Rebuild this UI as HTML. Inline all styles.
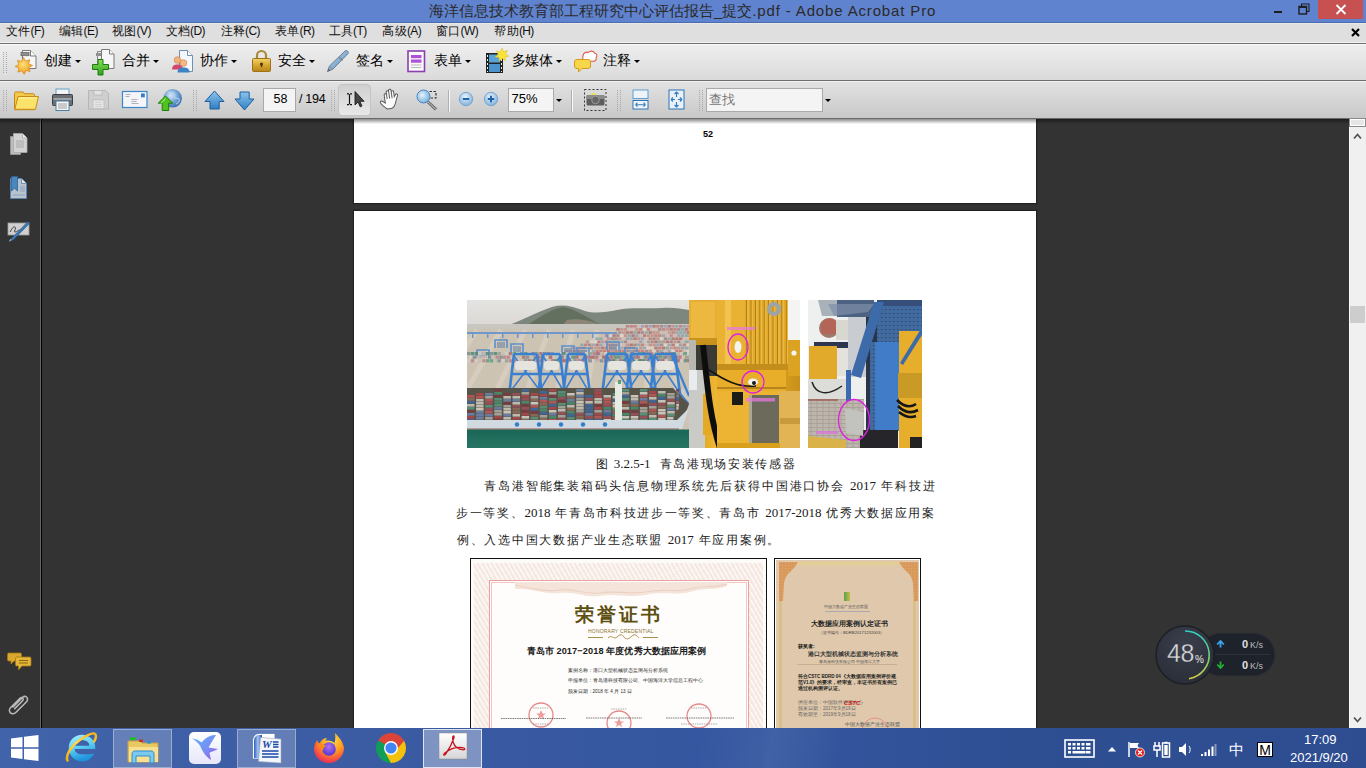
<!DOCTYPE html>
<html><head><meta charset="utf-8">
<style>
*{margin:0;padding:0;box-sizing:border-box}
html,body{width:1366px;height:768px;overflow:hidden;background:#333;font-family:"Liberation Sans",sans-serif}
.a{position:absolute}
#title{left:0;top:0;width:1366px;height:23px;background:#6083cf;border-bottom:1px solid #4a6cb0}
#ttext{left:429px;top:2px;font-size:15px;color:#2a2a2a;white-space:nowrap}
.tl{letter-spacing:0.85px}
#menu{left:0;top:23px;width:1366px;height:20px;background:#dfdfdf;border-top:1px solid #ebe9e6}
.mi{top:24px;font-size:12px;letter-spacing:0.3px;color:#111;white-space:nowrap;line-height:14px}
.ml{letter-spacing:-0.6px}
#sep1{left:0;top:42px;width:1366px;height:3px;background:linear-gradient(#f5f5f5 0,#f5f5f5 1px,#6e6e6e 1px,#6e6e6e 2px,#fafafa 2px)}
#tb1{left:0;top:45px;width:1366px;height:35px;background:linear-gradient(#eeeeee,#dadada)}
#sep2{left:0;top:80px;width:1366px;height:2px;background:linear-gradient(#6e6e6e 0,#6e6e6e 1px,#f3f3f3 1px)}
#tb2{left:0;top:82px;width:1366px;height:36px;background:linear-gradient(#e2e2e2,#c8c8c8)}
#sep3{left:0;top:118px;width:1366px;height:1px;background:#6a6a6a}
#left{left:0;top:119px;width:42px;height:609px;background:linear-gradient(90deg,#333 40px,#666 40px,#666 41px,#000 41px)}
#doc{left:42px;top:119px;width:1308px;height:609px;background:#333;overflow:hidden}
#page1{left:312px;top:-10px;width:682px;height:94px;background:#fff;box-shadow:0 0 1px 1px #222}
#page2{left:312px;top:92px;width:682px;height:700px;background:#fff;box-shadow:0 0 1px 1px #222}
#shadow{left:0;top:119px;width:1349px;height:5px;background:linear-gradient(rgba(0,0,0,.45),rgba(0,0,0,0))}
#scroll{left:1349px;top:119px;width:17px;height:609px;background:#efefef}
#taskbar{left:0;top:728px;width:1366px;height:40px;background:linear-gradient(90deg,#4163a9 0,#3a5ba2 30%,#3456a0 55%,#2f4f93 75%,#2e4d90 100%)}
.tk{color:#fff;font-size:12px;white-space:nowrap}.t1{top:53px;font-size:13.5px;line-height:16px;color:#000;white-space:nowrap;letter-spacing:0px}
.dd{width:0;height:0;border-left:3px solid transparent;border-right:3px solid transparent;border-top:3px solid #000}
.grip{width:4px;background-image:linear-gradient(90deg,#a8a8a8 1px,transparent 1px,transparent 3px,#a8a8a8 3px),linear-gradient(#fff0 1px,#e0e0e0 1px);background-size:4px 2px;-webkit-mask:linear-gradient(#000 1px,transparent 1px) 0 0/4px 2px}

.box{background:#f4f4f4;border:1px solid #a9a9a9}
.t2{font-size:13px;line-height:15px;color:#000;white-space:nowrap}
.vsep{width:2px;background:linear-gradient(90deg,#b0b0b0 1px,#f8f8f8 1px)}
.pt{font-family:"Liberation Serif",serif;font-size:12px;line-height:16px;color:#1a1a1a;white-space:nowrap;letter-spacing:1.3px}
.ln{font-size:13px;letter-spacing:0}
.jl{text-align:justify;text-align-last:justify;white-space:normal}

</style></head><body>
<div id="title" class="a"></div>
<div id="ttext" class="a">海洋信息技术教育部工程研究中心评估报告_提交<span class="tl">.pdf - Adobe Acrobat Pro</span></div>
<div id="menu" class="a"></div>

<div class="a mi" style="left:6px">文件<span class="ml">(F)</span></div>
<div class="a mi" style="left:59px">编辑<span class="ml">(E)</span></div>
<div class="a mi" style="left:112px">视图<span class="ml">(V)</span></div>
<div class="a mi" style="left:165.5px">文档<span class="ml">(D)</span></div>
<div class="a mi" style="left:220.5px">注释<span class="ml">(C)</span></div>
<div class="a mi" style="left:275px">表单<span class="ml">(R)</span></div>
<div class="a mi" style="left:328.5px">工具<span class="ml">(T)</span></div>
<div class="a mi" style="left:382.3px">高级<span class="ml">(A)</span></div>
<div class="a mi" style="left:436px">窗口<span class="ml">(W)</span></div>
<div class="a mi" style="left:494.3px">帮助<span class="ml">(H)</span></div>
<svg class="a" style="left:1351px;top:28px" width="9" height="9" viewBox="0 0 9 9"><path d="M1 1L8 8M8 1L1 8" stroke="#000" stroke-width="2.2"/></svg>
<div id="sep1" class="a"></div>
<div id="tb1" class="a"></div>
<div id="sep2" class="a"></div>
<div id="tb2" class="a"></div>
<div id="sep3" class="a"></div>
<div id="left" class="a"></div>
<div id="doc" class="a">
  <div id="page1" class="a"></div>
  <div id="page2" class="a"></div>
</div>
<div id="shadow" class="a"></div>
<div id="scroll" class="a"></div>
<div class="a" style="left:1318px;top:0;width:45px;height:19px;background:#c75050"></div>
<svg class="a" style="left:1335px;top:4px" width="12" height="11" viewBox="0 0 12 11"><path d="M1.5 1l9 9M10.5 1l-9 9" stroke="#fff" stroke-width="1.8"/></svg>
<div class="a" style="left:1274px;top:11px;width:8px;height:2px;background:#1e1e1e"></div>
<svg class="a" style="left:1298px;top:3px" width="12" height="12" viewBox="0 0 12 12"><path d="M3.5 3V1h7.5v7.5H9" fill="none" stroke="#1e1e1e" stroke-width="1.1"/><rect x="1" y="3.5" width="7.5" height="7.5" fill="none" stroke="#1e1e1e" stroke-width="1.4"/><path d="M1 4.2h7.5" stroke="#1e1e1e" stroke-width="1.5"/></svg>

<div class="a grip" style="left:3px;top:52px;height:22px"></div>
<!-- create -->
<svg class="a" style="left:13px;top:49px" width="26" height="28" viewBox="0 0 26 28">
 <path d="M9.5 1.5h8l5.5 5.5v12.5h-13.5z" fill="#f6f6f6" stroke="#7a7a7a"/>
 <path d="M17.5 1.5v5.5h5.5" fill="#fff" stroke="#7a7a7a"/>
 <rect x="8" y="3.5" width="8" height="3.2" fill="#8e8e8e" stroke="#6a6a6a" stroke-width="0.8"/>
 <defs><radialGradient id="st" cx=".45" cy=".4" r=".6"><stop offset="0" stop-color="#ffe07a"/><stop offset="1" stop-color="#f09a18"/></radialGradient></defs>
 <path d="M10.5 8.5l2.2 3.6 4-1.4-1 4.1 3.9 1.7-3.7 1.9 1.2 4.1-4.1-1-1.8 3.9-2.3-3.6-4 1.4 1-4.1-3.9-1.7 3.7-1.9-1.2-4.1 4.1 1z" fill="url(#st)" stroke="#d8861a" stroke-width="0.7"/>
</svg>
<div class="a t1" style="left:44px">创建</div><div class="a dd" style="left:74.5px;top:60px"></div>
<!-- combine -->
<svg class="a" style="left:91px;top:48px" width="26" height="29" viewBox="0 0 26 29">
 <path d="M6.5 3.5h8l4 4v12h-12z" fill="#eaeaea" stroke="#888"/>
 <rect x="5" y="5" width="8" height="3" fill="#909090"/>
 <path d="M10.5 1.5h8l4.5 4.5v14.5h-12.5z" fill="#f6f6f6" stroke="#7a7a7a"/>
 <path d="M18.5 1.5v4.5h4.5" fill="#fff" stroke="#7a7a7a"/>
 <defs><linearGradient id="pl" x1="0" y1="0" x2="0" y2="1"><stop offset="0" stop-color="#8be05a"/><stop offset="1" stop-color="#2ea01a"/></linearGradient></defs>
 <path d="M7 11.5h5v5h5.5v5h-5.5v5.5h-5v-5.5h-5.5v-5h5.5z" fill="url(#pl)" stroke="#1f7a10" stroke-width="1"/>
</svg>
<div class="a t1" style="left:122px">合并</div><div class="a dd" style="left:152.5px;top:60px"></div>
<!-- collaborate -->
<svg class="a" style="left:171px;top:49px" width="24" height="25" viewBox="0 0 24 25">
 <path d="M8.5 1.5h8l5 5v16h-13z" fill="#f4f7fb" stroke="#6f8fb3"/>
 <path d="M16.5 1.5v5h5" fill="#fff" stroke="#6f8fb3"/>
 <circle cx="6.5" cy="11" r="3.3" fill="#f3b27a" stroke="#c77d43" stroke-width="0.6"/>
 <path d="M1 20.5c0-4 2.5-5 5.5-5s5.5 1 5.5 5z" fill="#d0486b"/>
 <circle cx="12.5" cy="14" r="3.3" fill="#f6b982" stroke="#c77d43" stroke-width="0.6"/>
 <path d="M6.5 23.5c0-4 2.5-5 6-5s6 1 6 5z" fill="#3f83c7"/>
</svg>
<div class="a t1" style="left:200px">协作</div><div class="a dd" style="left:231px;top:60px"></div>
<!-- lock -->
<svg class="a" style="left:251px;top:49px" width="21" height="25" viewBox="0 0 21 25">
 <defs><linearGradient id="lk" x1="0" y1="0" x2="0" y2="1"><stop offset="0" stop-color="#f2d46a"/><stop offset=".5" stop-color="#d8a830"/><stop offset="1" stop-color="#b8841a"/></linearGradient></defs>
 <path d="M6 10V6.5a4.5 4.5 0 0 1 9 0V10" fill="none" stroke="#a88a3a" stroke-width="2.2"/>
 <rect x="1.5" y="9.5" width="18" height="13" rx="1" fill="url(#lk)" stroke="#9c7418"/>
 <circle cx="10.5" cy="15" r="1.5" fill="#4a3408"/><rect x="9.8" y="15" width="1.4" height="3" fill="#4a3408"/>
</svg>
<div class="a t1" style="left:278px">安全</div><div class="a dd" style="left:308.5px;top:60px"></div>
<!-- pen -->
<svg class="a" style="left:326px;top:49px" width="26" height="25" viewBox="0 0 26 25">
 <defs><linearGradient id="pn" x1="0" y1="0" x2="1" y2="1"><stop offset="0" stop-color="#b8daf2"/><stop offset="1" stop-color="#5a8ab8"/></linearGradient></defs>
 <path d="M1.5 22.5l2-5.5 15.5-15c1.6-1.3 4.2.7 3 2.6l-15 15.5z" fill="url(#pn)" stroke="#6a7f92" stroke-width="1"/>
 <path d="M3.5 17l3.5 3.5" stroke="#8a98a6" stroke-width="1.2"/>
 <path d="M1.5 22.5l1-3 2 2z" fill="#666"/>
 <path d="M13 8l3.5 3.5" stroke="#7a8a98" stroke-width="1.6"/>
</svg>
<div class="a t1" style="left:356px">签名</div><div class="a dd" style="left:386.5px;top:60px"></div>
<!-- forms -->
<svg class="a" style="left:407px;top:50px" width="19" height="23" viewBox="0 0 19 23">
 <rect x="1" y="1" width="16.5" height="20.5" fill="#fafafa" stroke="#8a3fb0" stroke-width="1.6"/>
 <rect x="4" y="5" width="10.5" height="3.2" fill="#b04fd8"/>
 <rect x="4" y="9.5" width="10.5" height="3.2" fill="#b04fd8"/>
 <path d="M4 15h10.5M4 17.5h10.5" stroke="#aaa" stroke-width="0.8"/>
</svg>
<div class="a t1" style="left:434px">表单</div><div class="a dd" style="left:464.5px;top:60px"></div>
<!-- multimedia -->
<svg class="a" style="left:485px;top:47px" width="25" height="27" viewBox="0 0 25 27">
 <rect x="1" y="6" width="17" height="20" fill="#222"/>
 <rect x="4" y="7.5" width="11" height="8" fill="#5aa3d8"/>
 <rect x="4" y="17" width="11" height="8" fill="#4b93cc"/>
 <path d="M2.5 8v2M2.5 12v2M2.5 16v2M2.5 20v2M2.5 24v1M16.5 8v2M16.5 12v2M16.5 16v2M16.5 20v2M16.5 24v1" stroke="#eee" stroke-width="1"/>
 <path d="M17 1l1.6 3.6 3.9-1-1.9 3.5 3.4 2.2-4 0.6 0.4 4-3.2-2.4-2.8 2.8-0.4-4-4-0.4 3.2-2.5-1.8-3.5 3.8 1z" fill="#f9e43a" stroke="#e3b91c" stroke-width="0.5"/>
</svg>
<div class="a t1" style="left:512px;letter-spacing:-0.6px">多媒体</div><div class="a dd" style="left:555.5px;top:60px"></div>
<!-- comment -->
<svg class="a" style="left:574px;top:50px" width="24" height="23" viewBox="0 0 24 23">
 <path d="M9 6c0-3 3-4.5 5.5-3.5 1.5-2 5-1.8 6 0.5 2.5 0.2 3 3.2 1.5 4.8 1 2-1 4-3 3.5H12c-2.5 0-4-2.5-3-5.3z" fill="#fff" stroke="#e0584a" stroke-width="1.1"/>
 <path d="M3 9.5h11c1.6 0 2.5 1 2.5 2.5v4c0 1.6-1 2.5-2.5 2.5H8l-3.5 3.5v-3.5H3c-1.6 0-2.5-1-2.5-2.5v-4c0-1.6 1-2.5 2.5-2.5z" fill="#f8d64a" stroke="#d49a1c" stroke-width="1"/>
</svg>
<div class="a t1" style="left:603px">注释</div><div class="a dd" style="left:633.5px;top:60px"></div>

<div class="a grip" style="left:3px;top:90px;height:22px"></div>
<!-- folder -->
<svg class="a" style="left:13px;top:90px" width="27" height="21" viewBox="0 0 27 21">
 <path d="M1.5 3.5c0-1 .6-1.5 1.5-1.5h7l1.5 1.7h8.5c.9 0 1.5.5 1.5 1.5v14.5H1.5z" fill="#f2c94a" stroke="#c88a17" stroke-width="1"/>
 <path d="M5 6.5h20.5l-3 12.8H1.8z" fill="#fbe26a" stroke="#c88a17" stroke-width="1"/>
 <path d="M6 8h18" stroke="#fff3a8" stroke-width="1"/>
</svg>
<!-- printer -->
<svg class="a" style="left:51px;top:88px" width="24" height="24" viewBox="0 0 24 24">
 <rect x="5" y="1" width="13" height="7" fill="#f3f3f3" stroke="#5fa3c9" stroke-width="1"/>
 <rect x="1.5" y="6.5" width="20" height="11" rx="1" fill="#6b6e72" stroke="#3c3f42"/>
 <rect x="2.5" y="10" width="18" height="2" fill="#9fa3a7"/>
 <rect x="5" y="13" width="13" height="9.5" fill="#f5f5f5" stroke="#4b7fa6" stroke-width="1"/>
 <path d="M7 16h9M7 18h9M7 20h9" stroke="#888" stroke-width="0.8"/>
</svg>
<!-- save (disabled) -->
<svg class="a" style="left:87px;top:89px" width="23" height="22" viewBox="0 0 23 22">
 <path d="M1.5 1.5h17l3 3v15.5h-20z" fill="#cfcfcf" stroke="#b5b5b5"/>
 <rect x="7" y="1.5" width="8" height="4.5" fill="#e3e3e3" stroke="#b8b8b8" stroke-width="0.8"/>
 <rect x="6" y="11" width="11" height="8.5" fill="#e6e6e6" stroke="#bdbdbd" stroke-width="0.8"/>
 <path d="M8 13.5h7M8 15.5h7M8 17.5h7" stroke="#c5c5c5" stroke-width="0.7"/>
</svg>
<!-- email -->
<svg class="a" style="left:121px;top:90px" width="28" height="19" viewBox="0 0 28 19">
 <rect x="1.5" y="1.5" width="24.5" height="16" fill="#f3f5f8" stroke="#3d86cc" stroke-width="1.2"/>
 <rect x="20" y="3.5" width="3.8" height="3.8" fill="#3a7cc0"/>
 <path d="M4.5 4.5h5M4.5 6.5h4M10.5 9.5h6M10.5 11.5h5M10.5 13.5h7" stroke="#9aa0a8" stroke-width="0.8"/>
</svg>
<!-- globe upload -->
<svg class="a" style="left:157px;top:88px" width="27" height="24" viewBox="0 0 27 24">
 <defs><radialGradient id="gl" cx="0.4" cy="0.35" r="0.7"><stop offset="0" stop-color="#d6e8f7"/><stop offset="0.55" stop-color="#6fa1d4"/><stop offset="1" stop-color="#3769a8"/></radialGradient></defs>
 <circle cx="15.6" cy="10.3" r="9.3" fill="url(#gl)"/>
 <path d="M11 4c2 1 4 0 6 1.5s-1 3 1 4.5 3-1 4 1-1 4-3 5" fill="none" stroke="#b9d6ee" stroke-width="1.2" opacity=".8"/>
 <path d="M8.5 8l7.2 7.2h-4v7.3h-6.5v-7.3h-4z" fill="#4fc21c" stroke="#1f7d0c" stroke-width="1"/>
 <path d="M4 15.5l4.5-5" stroke="#b5ef8a" stroke-width="1"/>
</svg>
<div class="a grip" style="left:193px;top:90px;height:22px"></div>
<!-- up arrow -->
<svg class="a" style="left:204px;top:90px" width="21" height="20" viewBox="0 0 21 20">
 <defs><linearGradient id="ar" x1="0" y1="0" x2="0" y2="1"><stop offset="0" stop-color="#8cc4ec"/><stop offset="1" stop-color="#2e7fc4"/></linearGradient></defs>
 <path d="M10.5 1L20 11.5h-4.8v7.5H6v-7.5H1z" fill="url(#ar)" stroke="#1f5f9e" stroke-width="1"/>
</svg>
<!-- down arrow -->
<svg class="a" style="left:234px;top:91px" width="21" height="20" viewBox="0 0 21 20">
 <path d="M10.5 19L20 8h-4.8V1H6v7H1z" fill="url(#ar)" stroke="#1f5f9e" stroke-width="1"/>
</svg>
<div class="a box" style="left:263px;top:88px;width:33px;height:24px"></div>
<div class="a t2" style="left:273.5px;top:91.5px;font-size:12.5px">58</div>
<div class="a t2" style="left:299px;top:91.5px;font-size:12.5px;letter-spacing:-0.3px">/ 194</div>
<div class="a grip" style="left:331px;top:90px;height:22px"></div>
<div class="a" style="left:338px;top:84px;width:33px;height:31.5px;border:1px solid #c4c4c4;border-radius:4px;background:linear-gradient(#d0d0d0,#e8e8e8)"></div>
<!-- I-beam + arrow -->
<svg class="a" style="left:345px;top:90px" width="21" height="18" viewBox="0 0 21 18">
 <path d="M2 3.8h2M5 3.8h2M2 14.7h2M5 14.7h2M4.5 4.2V14.3" stroke="#111" stroke-width="1.2"/>
 <path d="M10 1.5v13.5l3-3 2.2 4.8 1.8-0.8-2.2-4.7h4.3z" fill="#444" stroke="#111" stroke-width="0.8"/>
</svg>
<!-- hand -->
<svg class="a" style="left:379px;top:88px" width="23" height="22" viewBox="0 0 23 22">
 <path d="M7 20.5c-2.2-1.6-5.8-5.6-6-7.2-.2-1.3 1.2-1.9 2.2-1.1l2.6 2.2V6.2c0-1.5 2.4-1.5 2.4 0v4.3V3.6c0-1.6 2.5-1.6 2.5 0v6.9V2.6c0-1.6 2.5-1.6 2.5 0v8V4.4c0-1.5 2.4-1.5 2.4 0v4.8l1.4-1.8c.9-1.2 2.6-.4 2 1.1l-2.4 5.5c-1.2 3.6-2.6 6.5-5.6 6.5z" fill="#fbfbfb" stroke="#5a5a5a" stroke-width="1" transform="rotate(-8 11 11)"/>
</svg>
<!-- zoom marquee -->
<svg class="a" style="left:415px;top:89px" width="24" height="22" viewBox="0 0 24 22">
 <defs><radialGradient id="mg" cx="0.4" cy="0.4" r="0.7"><stop offset="0" stop-color="#e6f3fc"/><stop offset="1" stop-color="#6aa8d8"/></radialGradient></defs>
 <path d="M13 13l8 7.5" stroke="#555" stroke-width="3"/>
 <path d="M13 13l8 7.5" stroke="#b0b0b0" stroke-width="1.2"/>
 <rect x="10.5" y="2.5" width="10.5" height="6.5" fill="none" stroke="#333" stroke-width="1.2" stroke-dasharray="2.5 1.5"/>
 <circle cx="8.5" cy="7.5" r="6.5" fill="url(#mg)" stroke="#4e88bd" stroke-width="1"/>
</svg>
<div class="a vsep" style="left:448px;top:90px;height:22px"></div>
<svg class="a" style="left:458px;top:91px" width="16" height="16" viewBox="0 0 16 16">
 <defs><radialGradient id="zb" cx="0.45" cy="0.35" r="0.65"><stop offset="0" stop-color="#e9f4fc"/><stop offset="1" stop-color="#7fb0dc"/></radialGradient></defs>
 <circle cx="8" cy="8" r="6.7" fill="url(#zb)" stroke="#7aa6cf" stroke-width="1"/>
 <path d="M4.8 8h6.4" stroke="#1e62b0" stroke-width="2"/>
</svg>
<svg class="a" style="left:483px;top:91px" width="16" height="16" viewBox="0 0 16 16">
 <circle cx="8" cy="8" r="6.7" fill="url(#zb)" stroke="#7aa6cf" stroke-width="1"/>
 <path d="M4.8 8h6.4M8 4.8v6.4" stroke="#1e62b0" stroke-width="2"/>
</svg>
<div class="a box" style="left:508px;top:88px;width:46px;height:24px"></div>
<div class="a t2" style="left:511.5px;top:91px">75%</div>
<div class="a dd" style="left:555.5px;top:99px"></div>
<div class="a vsep" style="left:571px;top:90px;height:22px"></div>
<!-- camera -->
<svg class="a" style="left:583px;top:88px" width="25" height="24" viewBox="0 0 25 24">
 <rect x="1.5" y="1.5" width="21.5" height="21" fill="none" stroke="#333" stroke-width="1" stroke-dasharray="2 2"/>
 <rect x="8" y="5" width="5" height="2.5" fill="#e8e060"/>
 <rect x="3.5" y="7" width="18" height="10.5" rx="1.5" fill="#5d5d5d"/>
 <rect x="3.5" y="7" width="18" height="4" rx="1" fill="#8a8a8a"/>
 <circle cx="12.5" cy="12" r="3.8" fill="#666" stroke="#999" stroke-width="1"/>
</svg>
<div class="a grip" style="left:617px;top:90px;height:22px"></div>
<!-- fit width -->
<svg class="a" style="left:632px;top:89px" width="18" height="22" viewBox="0 0 18 22">
 <rect x="1" y="1" width="15" height="8.5" fill="#eef3f8" stroke="#5fa0d4" stroke-width="1"/>
 <rect x="1" y="11.5" width="15" height="8.5" fill="#f3f6f9" stroke="#2c74b8" stroke-width="1"/>
 <path d="M3.5 15.7h10M3.5 15.7l2-2M3.5 15.7l2 2M13.5 15.7l-2-2M13.5 15.7l-2 2" stroke="#2f7cc0" stroke-width="1.1"/>
</svg>
<!-- fit page -->
<svg class="a" style="left:668px;top:89px" width="18" height="22" viewBox="0 0 18 22">
 <rect x="1" y="1" width="15" height="19" fill="#e9f0f7" stroke="#2c74b8" stroke-width="1"/>
 <path d="M8.5 3v5M8.5 3l-2 2M8.5 3l2 2M8.5 18v-5M8.5 18l-2-2M8.5 18l2-2M3 10.5h4M3 10.5l2-2M3 10.5l2 2M14 10.5h-4M14 10.5l-2-2M14 10.5l-2 2" stroke="#2f7cc0" stroke-width="1.1"/>
</svg>
<div class="a grip" style="left:699px;top:90px;height:22px"></div>
<div class="a box" style="left:706px;top:88px;width:117px;height:24px"></div>
<div class="a t2" style="left:709px;top:92px;color:#777">查找</div>
<div class="a dd" style="left:824.5px;top:99px"></div>

<!-- pages -->
<svg class="a" style="left:9px;top:132px" width="20" height="24" viewBox="0 0 20 24">
 <path d="M1.5 4.5h10l0 18h-10z" fill="#bdbdbd" stroke="#9a9a9a" stroke-width="0.8"/>
 <path d="M4.5 1.5h9l4.5 4.5v14.5h-13.5z" fill="#d2d2d2" stroke="#a9a9a9" stroke-width="0.8"/>
 <path d="M13.5 1.5v4.5h4.5" fill="#ececec" stroke="#a9a9a9" stroke-width="0.8"/>
 <path d="M7 9h8M7 11h8M7 13h8M7 15h8" stroke="#9a9a9a" stroke-width="0.7"/>
</svg>
<!-- bookmarks -->
<svg class="a" style="left:9px;top:175px" width="20" height="25" viewBox="0 0 20 25">
 <path d="M1.5 3.5h11l5 5v15h-16z" fill="#b9c3cf" stroke="#5784b0" stroke-width="0.9"/>
 <path d="M12.5 3.5v5h5" fill="#dde4ea" stroke="#5784b0" stroke-width="0.8"/>
 <path d="M11 12h5M11 14h5M11 16h5M4 20h12" stroke="#7a96b3" stroke-width="0.7"/>
 <path d="M2.5 1.5h6v14.5l-3-2.8-3 2.8z" fill="#4a87bf" stroke="#2b5f93" stroke-width="0.8"/>
</svg>
<!-- signatures -->
<svg class="a" style="left:7px;top:219px" width="25" height="24" viewBox="0 0 25 24">
 <rect x="1" y="4" width="21" height="12" fill="#cfcfcf" stroke="#9c9c9c" stroke-width="0.8"/>
 <path d="M3 13c2-3 3-6 5-5s-2 5 0 5 3-2 5-2" fill="none" stroke="#333" stroke-width="0.9"/>
 <path d="M2 22.5l3-3.5 15-15.5c1.2-1 2.8 0.3 1.8 1.6l-15 15.3z" fill="#3b7ab5" stroke="#2a5b8a" stroke-width="0.7"/>
 <path d="M2 22.5l1.5-2.5 1 1z" fill="#ccc"/>
</svg>
<!-- comments -->
<svg class="a" style="left:7px;top:652px" width="25" height="20" viewBox="0 0 25 20">
 <path d="M2 1h11c1 0 1.5.6 1.5 1.5v5c0 1-.5 1.5-1.5 1.5H7l-3 3v-3H2C1 9 .5 8.5.5 7.5v-5C.5 1.6 1 1 2 1z" fill="#d9a82c" stroke="#a57716" stroke-width="0.8"/>
 <path d="M10 5h12.5c1 0 1.5.6 1.5 1.5v6c0 1-.5 1.5-1.5 1.5h-7.5l-3.5 4v-4h-1.5c-1 0-1.5-.5-1.5-1.5v-6C8.5 5.6 9 5 10 5z" fill="#e3b63a" stroke="#a57716" stroke-width="0.8"/>
 <path d="M12 8.5h9M12 11h9" stroke="#8a6412" stroke-width="1"/>
</svg>
<!-- attachments -->
<svg class="a" style="left:8px;top:692px" width="23" height="25" viewBox="0 0 23 25">
 <path d="M4.5 15.5l10-10c2-2 4.8-1.2 5 1.5.2 1.2-.4 2.2-1.2 3l-10.5 10.5c-1.5 1.5-4.2 1.6-5.5.2s-1-3.8.4-5.2l9.3-9.3c.8-.8 2.2-.8 2.8 0s.6 1.8-.2 2.6l-8.3 8.3" fill="none" stroke="#b9b9b9" stroke-width="1.6"/>
</svg>

<div class="a" style="left:703px;top:129px;font-size:9px;font-weight:bold;color:#000;font-family:'Liberation Sans',sans-serif">52</div>
<!-- photo 1: port -->
<svg class="a" style="left:467px;top:300px" width="222" height="148" viewBox="0 0 222 148">
<defs><linearGradient id="p1sky" x1="0" y1="0" x2="0" y2="1"><stop offset="0" stop-color="#e4e4e2"/><stop offset="0.2" stop-color="#d9d7d2"/><stop offset="1" stop-color="#cbbfae"/></linearGradient><linearGradient id="p1sea" x1="0" y1="0" x2="0" y2="1"><stop offset="0" stop-color="#1b6757"/><stop offset="1" stop-color="#277563"/></linearGradient><filter id="bl" x="0" y="0" width="1" height="1"><feGaussianBlur stdDeviation="0.7"/></filter></defs>
<g filter="url(#bl)">
<rect x="0.0" y="0.0" width="222.0" height="148.0" fill="url(#p1sky)"/>
<path d="M40 26 C55 20 70 12 85 7 C95 4 105 6 118 11 C128 14 140 12 150 10 C165 7 180 9 195 8 C205 7 215 9 222 10 V27 H40z" fill="#7d877d"/>
<path d="M62 24 C75 15 88 8 96 7 C106 8 118 16 132 24z" fill="#64705f"/>
<path d="M100 20 C110 18 125 20 135 26 H95z" fill="#b59a8a" opacity=".5"/>
<rect x="0.0" y="24.0" width="222.0" height="6.0" fill="#c9c5bf"/>
<rect x="0.0" y="29.0" width="222.0" height="60.0" fill="#cdc3b2"/>
<path d="M10 30 L-30 90" stroke="#dcd4c7" stroke-width="5" opacity=".6"/>
<path d="M34 30 L0 90" stroke="#dcd4c7" stroke-width="5" opacity=".6"/>
<path d="M58 30 L30 90" stroke="#dcd4c7" stroke-width="5" opacity=".6"/>
<path d="M82 30 L60 90" stroke="#dcd4c7" stroke-width="5" opacity=".6"/>
<path d="M106 30 L90 90" stroke="#dcd4c7" stroke-width="5" opacity=".6"/>
<path d="M130 30 L120 90" stroke="#dcd4c7" stroke-width="5" opacity=".6"/>
<path d="M154 30 L150 90" stroke="#dcd4c7" stroke-width="5" opacity=".6"/>
<path d="M178 30 L180 90" stroke="#dcd4c7" stroke-width="5" opacity=".6"/>
<path d="M202 30 L210 90" stroke="#dcd4c7" stroke-width="5" opacity=".6"/>
<rect x="158.8" y="25.0" width="3.3" height="2.6" fill="#c07070" opacity="0.75"/>
<rect x="162.6" y="25.0" width="3.3" height="2.6" fill="#c07070" opacity="0.75"/>
<rect x="166.4" y="25.0" width="3.3" height="2.6" fill="#c07070" opacity="0.75"/>
<rect x="170.2" y="25.0" width="3.3" height="2.6" fill="#d2b8b4" opacity="0.75"/>
<rect x="174.0" y="25.0" width="3.3" height="2.6" fill="#8f9ab5" opacity="0.75"/>
<rect x="177.8" y="25.0" width="3.3" height="2.6" fill="#c07070" opacity="0.75"/>
<rect x="181.6" y="25.0" width="3.3" height="2.6" fill="#8f9ab5" opacity="0.75"/>
<rect x="185.4" y="25.0" width="3.3" height="2.6" fill="#a8646a" opacity="0.75"/>
<rect x="189.2" y="25.0" width="3.3" height="2.6" fill="#c07070" opacity="0.75"/>
<rect x="193.0" y="25.0" width="3.3" height="2.6" fill="#9a7a80" opacity="0.75"/>
<rect x="196.8" y="25.0" width="3.3" height="2.6" fill="#8f9ab5" opacity="0.75"/>
<rect x="200.6" y="25.0" width="3.3" height="2.6" fill="#a8646a" opacity="0.75"/>
<rect x="204.4" y="25.0" width="3.3" height="2.6" fill="#b98886" opacity="0.75"/>
<rect x="208.2" y="25.0" width="3.3" height="2.6" fill="#7fa0a8" opacity="0.75"/>
<rect x="212.0" y="25.0" width="3.3" height="2.6" fill="#c07070" opacity="0.75"/>
<rect x="215.8" y="25.0" width="3.3" height="2.6" fill="#8f9ab5" opacity="0.75"/>
<rect x="219.6" y="25.0" width="3.3" height="2.6" fill="#b98886" opacity="0.75"/>
<rect x="149.3" y="28.1" width="3.3" height="2.6" fill="#a8646a" opacity="0.75"/>
<rect x="153.1" y="28.1" width="3.3" height="2.6" fill="#b98886" opacity="0.75"/>
<rect x="156.9" y="28.1" width="3.3" height="2.6" fill="#b98886" opacity="0.75"/>
<rect x="160.7" y="28.1" width="3.3" height="2.6" fill="#d2b8b4" opacity="0.75"/>
<rect x="164.5" y="28.1" width="3.3" height="2.6" fill="#d2b8b4" opacity="0.75"/>
<rect x="168.3" y="28.1" width="3.3" height="2.6" fill="#b98886" opacity="0.75"/>
<rect x="172.1" y="28.1" width="3.3" height="2.6" fill="#c07070" opacity="0.75"/>
<rect x="175.9" y="28.1" width="3.3" height="2.6" fill="#e0d8d0" opacity="0.75"/>
<rect x="179.7" y="28.1" width="3.3" height="2.6" fill="#c07070" opacity="0.75"/>
<rect x="183.5" y="28.1" width="3.3" height="2.6" fill="#d2b8b4" opacity="0.75"/>
<rect x="187.3" y="28.1" width="3.3" height="2.6" fill="#d2b8b4" opacity="0.75"/>
<rect x="191.1" y="28.1" width="3.3" height="2.6" fill="#9a7a80" opacity="0.75"/>
<rect x="194.9" y="28.1" width="3.3" height="2.6" fill="#c07070" opacity="0.75"/>
<rect x="198.7" y="28.1" width="3.3" height="2.6" fill="#b98886" opacity="0.75"/>
<rect x="202.5" y="28.1" width="3.3" height="2.6" fill="#a8646a" opacity="0.75"/>
<rect x="206.3" y="28.1" width="3.3" height="2.6" fill="#c07070" opacity="0.75"/>
<rect x="210.1" y="28.1" width="3.3" height="2.6" fill="#9a7a80" opacity="0.75"/>
<rect x="213.9" y="28.1" width="3.3" height="2.6" fill="#7fa0a8" opacity="0.75"/>
<rect x="217.7" y="28.1" width="3.3" height="2.6" fill="#a8646a" opacity="0.75"/>
<rect x="221.5" y="28.1" width="3.3" height="2.6" fill="#9a7a80" opacity="0.75"/>
<rect x="143.6" y="31.2" width="3.3" height="2.6" fill="#e0d8d0" opacity="0.75"/>
<rect x="147.4" y="31.2" width="3.3" height="2.6" fill="#d2b8b4" opacity="0.75"/>
<rect x="151.2" y="31.2" width="3.3" height="2.6" fill="#9a7a80" opacity="0.75"/>
<rect x="155.0" y="31.2" width="3.3" height="2.6" fill="#b98886" opacity="0.75"/>
<rect x="158.8" y="31.2" width="3.3" height="2.6" fill="#a8646a" opacity="0.75"/>
<rect x="162.6" y="31.2" width="3.3" height="2.6" fill="#a8646a" opacity="0.75"/>
<rect x="166.4" y="31.2" width="3.3" height="2.6" fill="#7fa0a8" opacity="0.75"/>
<rect x="170.2" y="31.2" width="3.3" height="2.6" fill="#a8646a" opacity="0.75"/>
<rect x="174.0" y="31.2" width="3.3" height="2.6" fill="#9a7a80" opacity="0.75"/>
<rect x="177.8" y="31.2" width="3.3" height="2.6" fill="#7fa0a8" opacity="0.75"/>
<rect x="181.6" y="31.2" width="3.3" height="2.6" fill="#a8646a" opacity="0.75"/>
<rect x="185.4" y="31.2" width="3.3" height="2.6" fill="#b98886" opacity="0.75"/>
<rect x="189.2" y="31.2" width="3.3" height="2.6" fill="#b98886" opacity="0.75"/>
<rect x="193.0" y="31.2" width="3.3" height="2.6" fill="#d2b8b4" opacity="0.75"/>
<rect x="196.8" y="31.2" width="3.3" height="2.6" fill="#d2b8b4" opacity="0.75"/>
<rect x="200.6" y="31.2" width="3.3" height="2.6" fill="#b98886" opacity="0.75"/>
<rect x="204.4" y="31.2" width="3.3" height="2.6" fill="#c07070" opacity="0.75"/>
<rect x="208.2" y="31.2" width="3.3" height="2.6" fill="#7fa0a8" opacity="0.75"/>
<rect x="212.0" y="31.2" width="3.3" height="2.6" fill="#7fa0a8" opacity="0.75"/>
<rect x="215.8" y="31.2" width="3.3" height="2.6" fill="#7fa0a8" opacity="0.75"/>
<rect x="219.6" y="31.2" width="3.3" height="2.6" fill="#a8646a" opacity="0.75"/>
<rect x="134.1" y="34.3" width="3.3" height="2.6" fill="#d2b8b4" opacity="0.75"/>
<rect x="137.9" y="34.3" width="3.3" height="2.6" fill="#9a7a80" opacity="0.75"/>
<rect x="141.7" y="34.3" width="3.3" height="2.6" fill="#e0d8d0" opacity="0.75"/>
<rect x="145.5" y="34.3" width="3.3" height="2.6" fill="#a8646a" opacity="0.75"/>
<rect x="149.3" y="34.3" width="3.3" height="2.6" fill="#9a7a80" opacity="0.75"/>
<rect x="153.1" y="34.3" width="3.3" height="2.6" fill="#e0d8d0" opacity="0.75"/>
<rect x="156.9" y="34.3" width="3.3" height="2.6" fill="#b98886" opacity="0.75"/>
<rect x="160.7" y="34.3" width="3.3" height="2.6" fill="#7fa0a8" opacity="0.75"/>
<rect x="164.5" y="34.3" width="3.3" height="2.6" fill="#a8646a" opacity="0.75"/>
<rect x="168.3" y="34.3" width="3.3" height="2.6" fill="#8f9ab5" opacity="0.75"/>
<rect x="172.1" y="34.3" width="3.3" height="2.6" fill="#d2b8b4" opacity="0.75"/>
<rect x="175.9" y="34.3" width="3.3" height="2.6" fill="#a8646a" opacity="0.75"/>
<rect x="179.7" y="34.3" width="3.3" height="2.6" fill="#b98886" opacity="0.75"/>
<rect x="183.5" y="34.3" width="3.3" height="2.6" fill="#b98886" opacity="0.75"/>
<rect x="187.3" y="34.3" width="3.3" height="2.6" fill="#c07070" opacity="0.75"/>
<rect x="191.1" y="34.3" width="3.3" height="2.6" fill="#c07070" opacity="0.75"/>
<rect x="194.9" y="34.3" width="3.3" height="2.6" fill="#8f9ab5" opacity="0.75"/>
<rect x="198.7" y="34.3" width="3.3" height="2.6" fill="#d2b8b4" opacity="0.75"/>
<rect x="202.5" y="34.3" width="3.3" height="2.6" fill="#c07070" opacity="0.75"/>
<rect x="206.3" y="34.3" width="3.3" height="2.6" fill="#d2b8b4" opacity="0.75"/>
<rect x="210.1" y="34.3" width="3.3" height="2.6" fill="#8f9ab5" opacity="0.75"/>
<rect x="213.9" y="34.3" width="3.3" height="2.6" fill="#7fa0a8" opacity="0.75"/>
<rect x="217.7" y="34.3" width="3.3" height="2.6" fill="#7fa0a8" opacity="0.75"/>
<rect x="221.5" y="34.3" width="3.3" height="2.6" fill="#a8646a" opacity="0.75"/>
<rect x="128.4" y="37.4" width="3.3" height="2.6" fill="#7fa0a8" opacity="0.75"/>
<rect x="132.2" y="37.4" width="3.3" height="2.6" fill="#7fa0a8" opacity="0.75"/>
<rect x="136.0" y="37.4" width="3.3" height="2.6" fill="#d2b8b4" opacity="0.75"/>
<rect x="139.8" y="37.4" width="3.3" height="2.6" fill="#b98886" opacity="0.75"/>
<rect x="143.6" y="37.4" width="3.3" height="2.6" fill="#9a7a80" opacity="0.75"/>
<rect x="147.4" y="37.4" width="3.3" height="2.6" fill="#9a7a80" opacity="0.75"/>
<rect x="151.2" y="37.4" width="3.3" height="2.6" fill="#b98886" opacity="0.75"/>
<rect x="155.0" y="37.4" width="3.3" height="2.6" fill="#d2b8b4" opacity="0.75"/>
<rect x="158.8" y="37.4" width="3.3" height="2.6" fill="#8f9ab5" opacity="0.75"/>
<rect x="162.6" y="37.4" width="3.3" height="2.6" fill="#7fa0a8" opacity="0.75"/>
<rect x="166.4" y="37.4" width="3.3" height="2.6" fill="#a8646a" opacity="0.75"/>
<rect x="170.2" y="37.4" width="3.3" height="2.6" fill="#b98886" opacity="0.75"/>
<rect x="174.0" y="37.4" width="3.3" height="2.6" fill="#8f9ab5" opacity="0.75"/>
<rect x="177.8" y="37.4" width="3.3" height="2.6" fill="#d2b8b4" opacity="0.75"/>
<rect x="181.6" y="37.4" width="3.3" height="2.6" fill="#c07070" opacity="0.75"/>
<rect x="185.4" y="37.4" width="3.3" height="2.6" fill="#9a7a80" opacity="0.75"/>
<rect x="189.2" y="37.4" width="3.3" height="2.6" fill="#b98886" opacity="0.75"/>
<rect x="193.0" y="37.4" width="3.3" height="2.6" fill="#e0d8d0" opacity="0.75"/>
<rect x="196.8" y="37.4" width="3.3" height="2.6" fill="#9a7a80" opacity="0.75"/>
<rect x="200.6" y="37.4" width="3.3" height="2.6" fill="#7fa0a8" opacity="0.75"/>
<rect x="204.4" y="37.4" width="3.3" height="2.6" fill="#a8646a" opacity="0.75"/>
<rect x="208.2" y="37.4" width="3.3" height="2.6" fill="#a8646a" opacity="0.75"/>
<rect x="212.0" y="37.4" width="3.3" height="2.6" fill="#a8646a" opacity="0.75"/>
<rect x="215.8" y="37.4" width="3.3" height="2.6" fill="#d2b8b4" opacity="0.75"/>
<rect x="219.6" y="37.4" width="3.3" height="2.6" fill="#d2b8b4" opacity="0.75"/>
<rect x="118.9" y="40.5" width="3.3" height="2.6" fill="#b98886" opacity="0.75"/>
<rect x="122.7" y="40.5" width="3.3" height="2.6" fill="#e0d8d0" opacity="0.75"/>
<rect x="126.5" y="40.5" width="3.3" height="2.6" fill="#e0d8d0" opacity="0.75"/>
<rect x="130.3" y="40.5" width="3.3" height="2.6" fill="#c07070" opacity="0.75"/>
<rect x="134.1" y="40.5" width="3.3" height="2.6" fill="#8f9ab5" opacity="0.75"/>
<rect x="137.9" y="40.5" width="3.3" height="2.6" fill="#c07070" opacity="0.75"/>
<rect x="141.7" y="40.5" width="3.3" height="2.6" fill="#8f9ab5" opacity="0.75"/>
<rect x="145.5" y="40.5" width="3.3" height="2.6" fill="#7fa0a8" opacity="0.75"/>
<rect x="149.3" y="40.5" width="3.3" height="2.6" fill="#8f9ab5" opacity="0.75"/>
<rect x="153.1" y="40.5" width="3.3" height="2.6" fill="#8f9ab5" opacity="0.75"/>
<rect x="156.9" y="40.5" width="3.3" height="2.6" fill="#9a7a80" opacity="0.75"/>
<rect x="160.7" y="40.5" width="3.3" height="2.6" fill="#d2b8b4" opacity="0.75"/>
<rect x="164.5" y="40.5" width="3.3" height="2.6" fill="#d2b8b4" opacity="0.75"/>
<rect x="168.3" y="40.5" width="3.3" height="2.6" fill="#d2b8b4" opacity="0.75"/>
<rect x="172.1" y="40.5" width="3.3" height="2.6" fill="#8f9ab5" opacity="0.75"/>
<rect x="175.9" y="40.5" width="3.3" height="2.6" fill="#d2b8b4" opacity="0.75"/>
<rect x="179.7" y="40.5" width="3.3" height="2.6" fill="#7fa0a8" opacity="0.75"/>
<rect x="183.5" y="40.5" width="3.3" height="2.6" fill="#c07070" opacity="0.75"/>
<rect x="187.3" y="40.5" width="3.3" height="2.6" fill="#a8646a" opacity="0.75"/>
<rect x="191.1" y="40.5" width="3.3" height="2.6" fill="#7fa0a8" opacity="0.75"/>
<rect x="194.9" y="40.5" width="3.3" height="2.6" fill="#b98886" opacity="0.75"/>
<rect x="198.7" y="40.5" width="3.3" height="2.6" fill="#a8646a" opacity="0.75"/>
<rect x="202.5" y="40.5" width="3.3" height="2.6" fill="#a8646a" opacity="0.75"/>
<rect x="206.3" y="40.5" width="3.3" height="2.6" fill="#b98886" opacity="0.75"/>
<rect x="210.1" y="40.5" width="3.3" height="2.6" fill="#9a7a80" opacity="0.75"/>
<rect x="213.9" y="40.5" width="3.3" height="2.6" fill="#d2b8b4" opacity="0.75"/>
<rect x="217.7" y="40.5" width="3.3" height="2.6" fill="#7fa0a8" opacity="0.75"/>
<rect x="221.5" y="40.5" width="3.3" height="2.6" fill="#9a7a80" opacity="0.75"/>
<rect x="113.2" y="43.6" width="3.3" height="2.6" fill="#7fa0a8" opacity="0.75"/>
<rect x="117.0" y="43.6" width="3.3" height="2.6" fill="#c07070" opacity="0.75"/>
<rect x="120.8" y="43.6" width="3.3" height="2.6" fill="#9a7a80" opacity="0.75"/>
<rect x="124.6" y="43.6" width="3.3" height="2.6" fill="#8f9ab5" opacity="0.75"/>
<rect x="128.4" y="43.6" width="3.3" height="2.6" fill="#a8646a" opacity="0.75"/>
<rect x="132.2" y="43.6" width="3.3" height="2.6" fill="#8f9ab5" opacity="0.75"/>
<rect x="136.0" y="43.6" width="3.3" height="2.6" fill="#d2b8b4" opacity="0.75"/>
<rect x="139.8" y="43.6" width="3.3" height="2.6" fill="#c07070" opacity="0.75"/>
<rect x="143.6" y="43.6" width="3.3" height="2.6" fill="#a8646a" opacity="0.75"/>
<rect x="147.4" y="43.6" width="3.3" height="2.6" fill="#9a7a80" opacity="0.75"/>
<rect x="151.2" y="43.6" width="3.3" height="2.6" fill="#d2b8b4" opacity="0.75"/>
<rect x="155.0" y="43.6" width="3.3" height="2.6" fill="#d2b8b4" opacity="0.75"/>
<rect x="158.8" y="43.6" width="3.3" height="2.6" fill="#b98886" opacity="0.75"/>
<rect x="162.6" y="43.6" width="3.3" height="2.6" fill="#a8646a" opacity="0.75"/>
<rect x="166.4" y="43.6" width="3.3" height="2.6" fill="#9a7a80" opacity="0.75"/>
<rect x="170.2" y="43.6" width="3.3" height="2.6" fill="#7fa0a8" opacity="0.75"/>
<rect x="174.0" y="43.6" width="3.3" height="2.6" fill="#c07070" opacity="0.75"/>
<rect x="177.8" y="43.6" width="3.3" height="2.6" fill="#d2b8b4" opacity="0.75"/>
<rect x="181.6" y="43.6" width="3.3" height="2.6" fill="#b98886" opacity="0.75"/>
<rect x="185.4" y="43.6" width="3.3" height="2.6" fill="#b98886" opacity="0.75"/>
<rect x="189.2" y="43.6" width="3.3" height="2.6" fill="#8f9ab5" opacity="0.75"/>
<rect x="193.0" y="43.6" width="3.3" height="2.6" fill="#9a7a80" opacity="0.75"/>
<rect x="196.8" y="43.6" width="3.3" height="2.6" fill="#e0d8d0" opacity="0.75"/>
<rect x="200.6" y="43.6" width="3.3" height="2.6" fill="#8f9ab5" opacity="0.75"/>
<rect x="204.4" y="43.6" width="3.3" height="2.6" fill="#a8646a" opacity="0.75"/>
<rect x="208.2" y="43.6" width="3.3" height="2.6" fill="#e0d8d0" opacity="0.75"/>
<rect x="212.0" y="43.6" width="3.3" height="2.6" fill="#8f9ab5" opacity="0.75"/>
<rect x="215.8" y="43.6" width="3.3" height="2.6" fill="#c07070" opacity="0.75"/>
<rect x="219.6" y="43.6" width="3.3" height="2.6" fill="#e0d8d0" opacity="0.75"/>
<rect x="103.7" y="46.7" width="3.3" height="2.6" fill="#8f9ab5" opacity="0.75"/>
<rect x="107.5" y="46.7" width="3.3" height="2.6" fill="#b98886" opacity="0.75"/>
<rect x="111.3" y="46.7" width="3.3" height="2.6" fill="#b98886" opacity="0.75"/>
<rect x="115.1" y="46.7" width="3.3" height="2.6" fill="#c07070" opacity="0.75"/>
<rect x="118.9" y="46.7" width="3.3" height="2.6" fill="#e0d8d0" opacity="0.75"/>
<rect x="122.7" y="46.7" width="3.3" height="2.6" fill="#9a7a80" opacity="0.75"/>
<rect x="126.5" y="46.7" width="3.3" height="2.6" fill="#b98886" opacity="0.75"/>
<rect x="130.3" y="46.7" width="3.3" height="2.6" fill="#b98886" opacity="0.75"/>
<rect x="134.1" y="46.7" width="3.3" height="2.6" fill="#a8646a" opacity="0.75"/>
<rect x="137.9" y="46.7" width="3.3" height="2.6" fill="#c07070" opacity="0.75"/>
<rect x="141.7" y="46.7" width="3.3" height="2.6" fill="#a8646a" opacity="0.75"/>
<rect x="145.5" y="46.7" width="3.3" height="2.6" fill="#9a7a80" opacity="0.75"/>
<rect x="149.3" y="46.7" width="3.3" height="2.6" fill="#e0d8d0" opacity="0.75"/>
<rect x="153.1" y="46.7" width="3.3" height="2.6" fill="#8f9ab5" opacity="0.75"/>
<rect x="156.9" y="46.7" width="3.3" height="2.6" fill="#a8646a" opacity="0.75"/>
<rect x="160.7" y="46.7" width="3.3" height="2.6" fill="#a8646a" opacity="0.75"/>
<rect x="164.5" y="46.7" width="3.3" height="2.6" fill="#c07070" opacity="0.75"/>
<rect x="168.3" y="46.7" width="3.3" height="2.6" fill="#e0d8d0" opacity="0.75"/>
<rect x="172.1" y="46.7" width="3.3" height="2.6" fill="#b98886" opacity="0.75"/>
<rect x="175.9" y="46.7" width="3.3" height="2.6" fill="#8f9ab5" opacity="0.75"/>
<rect x="179.7" y="46.7" width="3.3" height="2.6" fill="#e0d8d0" opacity="0.75"/>
<rect x="183.5" y="46.7" width="3.3" height="2.6" fill="#e0d8d0" opacity="0.75"/>
<rect x="187.3" y="46.7" width="3.3" height="2.6" fill="#a8646a" opacity="0.75"/>
<rect x="191.1" y="46.7" width="3.3" height="2.6" fill="#c07070" opacity="0.75"/>
<rect x="194.9" y="46.7" width="3.3" height="2.6" fill="#a8646a" opacity="0.75"/>
<rect x="198.7" y="46.7" width="3.3" height="2.6" fill="#7fa0a8" opacity="0.75"/>
<rect x="202.5" y="46.7" width="3.3" height="2.6" fill="#b98886" opacity="0.75"/>
<rect x="206.3" y="46.7" width="3.3" height="2.6" fill="#c07070" opacity="0.75"/>
<rect x="210.1" y="46.7" width="3.3" height="2.6" fill="#b98886" opacity="0.75"/>
<rect x="213.9" y="46.7" width="3.3" height="2.6" fill="#7fa0a8" opacity="0.75"/>
<rect x="217.7" y="46.7" width="3.3" height="2.6" fill="#7fa0a8" opacity="0.75"/>
<rect x="221.5" y="46.7" width="3.3" height="2.6" fill="#b98886" opacity="0.75"/>
<rect x="98.0" y="49.8" width="3.3" height="2.6" fill="#a8646a" opacity="0.75"/>
<rect x="101.8" y="49.8" width="3.3" height="2.6" fill="#a8646a" opacity="0.75"/>
<rect x="105.6" y="49.8" width="3.3" height="2.6" fill="#a8646a" opacity="0.75"/>
<rect x="109.4" y="49.8" width="3.3" height="2.6" fill="#a8646a" opacity="0.75"/>
<rect x="113.2" y="49.8" width="3.3" height="2.6" fill="#9a7a80" opacity="0.75"/>
<rect x="117.0" y="49.8" width="3.3" height="2.6" fill="#7fa0a8" opacity="0.75"/>
<rect x="120.8" y="49.8" width="3.3" height="2.6" fill="#e0d8d0" opacity="0.75"/>
<rect x="124.6" y="49.8" width="3.3" height="2.6" fill="#7fa0a8" opacity="0.75"/>
<rect x="128.4" y="49.8" width="3.3" height="2.6" fill="#c07070" opacity="0.75"/>
<rect x="132.2" y="49.8" width="3.3" height="2.6" fill="#c07070" opacity="0.75"/>
<rect x="136.0" y="49.8" width="3.3" height="2.6" fill="#c07070" opacity="0.75"/>
<rect x="139.8" y="49.8" width="3.3" height="2.6" fill="#a8646a" opacity="0.75"/>
<rect x="143.6" y="49.8" width="3.3" height="2.6" fill="#b98886" opacity="0.75"/>
<rect x="147.4" y="49.8" width="3.3" height="2.6" fill="#9a7a80" opacity="0.75"/>
<rect x="151.2" y="49.8" width="3.3" height="2.6" fill="#a8646a" opacity="0.75"/>
<rect x="155.0" y="49.8" width="3.3" height="2.6" fill="#c07070" opacity="0.75"/>
<rect x="158.8" y="49.8" width="3.3" height="2.6" fill="#b98886" opacity="0.75"/>
<rect x="162.6" y="49.8" width="3.3" height="2.6" fill="#d2b8b4" opacity="0.75"/>
<rect x="166.4" y="49.8" width="3.3" height="2.6" fill="#a8646a" opacity="0.75"/>
<rect x="170.2" y="49.8" width="3.3" height="2.6" fill="#c07070" opacity="0.75"/>
<rect x="174.0" y="49.8" width="3.3" height="2.6" fill="#c07070" opacity="0.75"/>
<rect x="177.8" y="49.8" width="3.3" height="2.6" fill="#9a7a80" opacity="0.75"/>
<rect x="181.6" y="49.8" width="3.3" height="2.6" fill="#b98886" opacity="0.75"/>
<rect x="185.4" y="49.8" width="3.3" height="2.6" fill="#e0d8d0" opacity="0.75"/>
<rect x="189.2" y="49.8" width="3.3" height="2.6" fill="#9a7a80" opacity="0.75"/>
<rect x="193.0" y="49.8" width="3.3" height="2.6" fill="#8f9ab5" opacity="0.75"/>
<rect x="196.8" y="49.8" width="3.3" height="2.6" fill="#d2b8b4" opacity="0.75"/>
<rect x="200.6" y="49.8" width="3.3" height="2.6" fill="#8f9ab5" opacity="0.75"/>
<rect x="204.4" y="49.8" width="3.3" height="2.6" fill="#e0d8d0" opacity="0.75"/>
<rect x="208.2" y="49.8" width="3.3" height="2.6" fill="#c07070" opacity="0.75"/>
<rect x="212.0" y="49.8" width="3.3" height="2.6" fill="#c07070" opacity="0.75"/>
<rect x="215.8" y="49.8" width="3.3" height="2.6" fill="#d2b8b4" opacity="0.75"/>
<rect x="219.6" y="49.8" width="3.3" height="2.6" fill="#e0d8d0" opacity="0.75"/>
<rect x="88.5" y="52.9" width="3.3" height="2.6" fill="#7fa0a8" opacity="0.75"/>
<rect x="92.3" y="52.9" width="3.3" height="2.6" fill="#9a7a80" opacity="0.75"/>
<rect x="96.1" y="52.9" width="3.3" height="2.6" fill="#d2b8b4" opacity="0.75"/>
<rect x="99.9" y="52.9" width="3.3" height="2.6" fill="#7fa0a8" opacity="0.75"/>
<rect x="103.7" y="52.9" width="3.3" height="2.6" fill="#d2b8b4" opacity="0.75"/>
<rect x="107.5" y="52.9" width="3.3" height="2.6" fill="#d2b8b4" opacity="0.75"/>
<rect x="111.3" y="52.9" width="3.3" height="2.6" fill="#7fa0a8" opacity="0.75"/>
<rect x="115.1" y="52.9" width="3.3" height="2.6" fill="#d2b8b4" opacity="0.75"/>
<rect x="118.9" y="52.9" width="3.3" height="2.6" fill="#e0d8d0" opacity="0.75"/>
<rect x="122.7" y="52.9" width="3.3" height="2.6" fill="#d2b8b4" opacity="0.75"/>
<rect x="126.5" y="52.9" width="3.3" height="2.6" fill="#8f9ab5" opacity="0.75"/>
<rect x="130.3" y="52.9" width="3.3" height="2.6" fill="#8f9ab5" opacity="0.75"/>
<rect x="134.1" y="52.9" width="3.3" height="2.6" fill="#c07070" opacity="0.75"/>
<rect x="137.9" y="52.9" width="3.3" height="2.6" fill="#e0d8d0" opacity="0.75"/>
<rect x="141.7" y="52.9" width="3.3" height="2.6" fill="#b98886" opacity="0.75"/>
<rect x="145.5" y="52.9" width="3.3" height="2.6" fill="#a8646a" opacity="0.75"/>
<rect x="149.3" y="52.9" width="3.3" height="2.6" fill="#9a7a80" opacity="0.75"/>
<rect x="153.1" y="52.9" width="3.3" height="2.6" fill="#8f9ab5" opacity="0.75"/>
<rect x="156.9" y="52.9" width="3.3" height="2.6" fill="#a8646a" opacity="0.75"/>
<rect x="160.7" y="52.9" width="3.3" height="2.6" fill="#c07070" opacity="0.75"/>
<rect x="164.5" y="52.9" width="3.3" height="2.6" fill="#c07070" opacity="0.75"/>
<rect x="168.3" y="52.9" width="3.3" height="2.6" fill="#9a7a80" opacity="0.75"/>
<rect x="172.1" y="52.9" width="3.3" height="2.6" fill="#d2b8b4" opacity="0.75"/>
<rect x="175.9" y="52.9" width="3.3" height="2.6" fill="#7fa0a8" opacity="0.75"/>
<rect x="179.7" y="52.9" width="3.3" height="2.6" fill="#7fa0a8" opacity="0.75"/>
<rect x="183.5" y="52.9" width="3.3" height="2.6" fill="#c07070" opacity="0.75"/>
<rect x="187.3" y="52.9" width="3.3" height="2.6" fill="#e0d8d0" opacity="0.75"/>
<rect x="191.1" y="52.9" width="3.3" height="2.6" fill="#c07070" opacity="0.75"/>
<rect x="194.9" y="52.9" width="3.3" height="2.6" fill="#e0d8d0" opacity="0.75"/>
<rect x="198.7" y="52.9" width="3.3" height="2.6" fill="#a8646a" opacity="0.75"/>
<rect x="202.5" y="52.9" width="3.3" height="2.6" fill="#b98886" opacity="0.75"/>
<rect x="206.3" y="52.9" width="3.3" height="2.6" fill="#9a7a80" opacity="0.75"/>
<rect x="210.1" y="52.9" width="3.3" height="2.6" fill="#b98886" opacity="0.75"/>
<rect x="213.9" y="52.9" width="3.3" height="2.6" fill="#9a7a80" opacity="0.75"/>
<rect x="217.7" y="52.9" width="3.3" height="2.6" fill="#e0d8d0" opacity="0.75"/>
<rect x="221.5" y="52.9" width="3.3" height="2.6" fill="#9a7a80" opacity="0.75"/>
<rect x="82.8" y="56.0" width="3.3" height="2.6" fill="#b98886" opacity="0.75"/>
<rect x="86.6" y="56.0" width="3.3" height="2.6" fill="#8f9ab5" opacity="0.75"/>
<rect x="90.4" y="56.0" width="3.3" height="2.6" fill="#7fa0a8" opacity="0.75"/>
<rect x="94.2" y="56.0" width="3.3" height="2.6" fill="#c07070" opacity="0.75"/>
<rect x="98.0" y="56.0" width="3.3" height="2.6" fill="#d2b8b4" opacity="0.75"/>
<rect x="101.8" y="56.0" width="3.3" height="2.6" fill="#b98886" opacity="0.75"/>
<rect x="105.6" y="56.0" width="3.3" height="2.6" fill="#9a7a80" opacity="0.75"/>
<rect x="109.4" y="56.0" width="3.3" height="2.6" fill="#d2b8b4" opacity="0.75"/>
<rect x="113.2" y="56.0" width="3.3" height="2.6" fill="#8f9ab5" opacity="0.75"/>
<rect x="117.0" y="56.0" width="3.3" height="2.6" fill="#b98886" opacity="0.75"/>
<rect x="120.8" y="56.0" width="3.3" height="2.6" fill="#a8646a" opacity="0.75"/>
<rect x="124.6" y="56.0" width="3.3" height="2.6" fill="#c07070" opacity="0.75"/>
<rect x="128.4" y="56.0" width="3.3" height="2.6" fill="#a8646a" opacity="0.75"/>
<rect x="132.2" y="56.0" width="3.3" height="2.6" fill="#e0d8d0" opacity="0.75"/>
<rect x="136.0" y="56.0" width="3.3" height="2.6" fill="#a8646a" opacity="0.75"/>
<rect x="139.8" y="56.0" width="3.3" height="2.6" fill="#d2b8b4" opacity="0.75"/>
<rect x="143.6" y="56.0" width="3.3" height="2.6" fill="#d2b8b4" opacity="0.75"/>
<rect x="147.4" y="56.0" width="3.3" height="2.6" fill="#c07070" opacity="0.75"/>
<rect x="151.2" y="56.0" width="3.3" height="2.6" fill="#9a7a80" opacity="0.75"/>
<rect x="155.0" y="56.0" width="3.3" height="2.6" fill="#8f9ab5" opacity="0.75"/>
<rect x="158.8" y="56.0" width="3.3" height="2.6" fill="#b98886" opacity="0.75"/>
<rect x="162.6" y="56.0" width="3.3" height="2.6" fill="#c07070" opacity="0.75"/>
<rect x="166.4" y="56.0" width="3.3" height="2.6" fill="#b98886" opacity="0.75"/>
<rect x="170.2" y="56.0" width="3.3" height="2.6" fill="#8f9ab5" opacity="0.75"/>
<rect x="174.0" y="56.0" width="3.3" height="2.6" fill="#d2b8b4" opacity="0.75"/>
<rect x="177.8" y="56.0" width="3.3" height="2.6" fill="#9a7a80" opacity="0.75"/>
<rect x="181.6" y="56.0" width="3.3" height="2.6" fill="#e0d8d0" opacity="0.75"/>
<rect x="185.4" y="56.0" width="3.3" height="2.6" fill="#8f9ab5" opacity="0.75"/>
<rect x="189.2" y="56.0" width="3.3" height="2.6" fill="#7fa0a8" opacity="0.75"/>
<rect x="193.0" y="56.0" width="3.3" height="2.6" fill="#d2b8b4" opacity="0.75"/>
<rect x="196.8" y="56.0" width="3.3" height="2.6" fill="#a8646a" opacity="0.75"/>
<rect x="200.6" y="56.0" width="3.3" height="2.6" fill="#7fa0a8" opacity="0.75"/>
<rect x="204.4" y="56.0" width="3.3" height="2.6" fill="#7fa0a8" opacity="0.75"/>
<rect x="208.2" y="56.0" width="3.3" height="2.6" fill="#8f9ab5" opacity="0.75"/>
<rect x="212.0" y="56.0" width="3.3" height="2.6" fill="#c07070" opacity="0.75"/>
<rect x="215.8" y="56.0" width="3.3" height="2.6" fill="#c07070" opacity="0.75"/>
<rect x="219.6" y="56.0" width="3.3" height="2.6" fill="#d2b8b4" opacity="0.75"/>
<rect x="73.3" y="59.1" width="3.3" height="2.6" fill="#b98886" opacity="0.75"/>
<rect x="77.1" y="59.1" width="3.3" height="2.6" fill="#7fa0a8" opacity="0.75"/>
<rect x="80.9" y="59.1" width="3.3" height="2.6" fill="#e0d8d0" opacity="0.75"/>
<rect x="84.7" y="59.1" width="3.3" height="2.6" fill="#c07070" opacity="0.75"/>
<rect x="88.5" y="59.1" width="3.3" height="2.6" fill="#e0d8d0" opacity="0.75"/>
<rect x="92.3" y="59.1" width="3.3" height="2.6" fill="#d2b8b4" opacity="0.75"/>
<rect x="96.1" y="59.1" width="3.3" height="2.6" fill="#a8646a" opacity="0.75"/>
<rect x="99.9" y="59.1" width="3.3" height="2.6" fill="#a8646a" opacity="0.75"/>
<rect x="103.7" y="59.1" width="3.3" height="2.6" fill="#d2b8b4" opacity="0.75"/>
<rect x="107.5" y="59.1" width="3.3" height="2.6" fill="#d2b8b4" opacity="0.75"/>
<rect x="111.3" y="59.1" width="3.3" height="2.6" fill="#7fa0a8" opacity="0.75"/>
<rect x="115.1" y="59.1" width="3.3" height="2.6" fill="#a8646a" opacity="0.75"/>
<rect x="118.9" y="59.1" width="3.3" height="2.6" fill="#9a7a80" opacity="0.75"/>
<rect x="122.7" y="59.1" width="3.3" height="2.6" fill="#e0d8d0" opacity="0.75"/>
<rect x="126.5" y="59.1" width="3.3" height="2.6" fill="#9a7a80" opacity="0.75"/>
<rect x="130.3" y="59.1" width="3.3" height="2.6" fill="#b98886" opacity="0.75"/>
<rect x="134.1" y="59.1" width="3.3" height="2.6" fill="#e0d8d0" opacity="0.75"/>
<rect x="137.9" y="59.1" width="3.3" height="2.6" fill="#a8646a" opacity="0.75"/>
<rect x="141.7" y="59.1" width="3.3" height="2.6" fill="#b98886" opacity="0.75"/>
<rect x="145.5" y="59.1" width="3.3" height="2.6" fill="#c07070" opacity="0.75"/>
<rect x="149.3" y="59.1" width="3.3" height="2.6" fill="#e0d8d0" opacity="0.75"/>
<rect x="153.1" y="59.1" width="3.3" height="2.6" fill="#7fa0a8" opacity="0.75"/>
<rect x="156.9" y="59.1" width="3.3" height="2.6" fill="#9a7a80" opacity="0.75"/>
<rect x="160.7" y="59.1" width="3.3" height="2.6" fill="#c07070" opacity="0.75"/>
<rect x="164.5" y="59.1" width="3.3" height="2.6" fill="#b98886" opacity="0.75"/>
<rect x="168.3" y="59.1" width="3.3" height="2.6" fill="#d2b8b4" opacity="0.75"/>
<rect x="172.1" y="59.1" width="3.3" height="2.6" fill="#a8646a" opacity="0.75"/>
<rect x="175.9" y="59.1" width="3.3" height="2.6" fill="#7fa0a8" opacity="0.75"/>
<rect x="179.7" y="59.1" width="3.3" height="2.6" fill="#b98886" opacity="0.75"/>
<rect x="183.5" y="59.1" width="3.3" height="2.6" fill="#8f9ab5" opacity="0.75"/>
<rect x="187.3" y="59.1" width="3.3" height="2.6" fill="#e0d8d0" opacity="0.75"/>
<rect x="191.1" y="59.1" width="3.3" height="2.6" fill="#8f9ab5" opacity="0.75"/>
<rect x="194.9" y="59.1" width="3.3" height="2.6" fill="#c07070" opacity="0.75"/>
<rect x="198.7" y="59.1" width="3.3" height="2.6" fill="#8f9ab5" opacity="0.75"/>
<rect x="202.5" y="59.1" width="3.3" height="2.6" fill="#c07070" opacity="0.75"/>
<rect x="206.3" y="59.1" width="3.3" height="2.6" fill="#c07070" opacity="0.75"/>
<rect x="210.1" y="59.1" width="3.3" height="2.6" fill="#a8646a" opacity="0.75"/>
<rect x="213.9" y="59.1" width="3.3" height="2.6" fill="#d2b8b4" opacity="0.75"/>
<rect x="217.7" y="59.1" width="3.3" height="2.6" fill="#c07070" opacity="0.75"/>
<rect x="221.5" y="59.1" width="3.3" height="2.6" fill="#9a7a80" opacity="0.75"/>
<path d="M0 33 H150" stroke="#6e98cc" stroke-width="1.8"/>
<rect x="5.0" y="33.0" width="1.5" height="5.0" fill="#6e98cc"/>
<rect x="20.0" y="33.0" width="1.5" height="5.0" fill="#6e98cc"/>
<rect x="35.0" y="33.0" width="1.5" height="5.0" fill="#6e98cc"/>
<rect x="50.0" y="33.0" width="1.5" height="5.0" fill="#6e98cc"/>
<rect x="65.0" y="33.0" width="1.5" height="5.0" fill="#6e98cc"/>
<rect x="80.0" y="33.0" width="1.5" height="5.0" fill="#6e98cc"/>
<rect x="95.0" y="33.0" width="1.5" height="5.0" fill="#6e98cc"/>
<rect x="110.0" y="33.0" width="1.5" height="5.0" fill="#6e98cc"/>
<rect x="125.0" y="33.0" width="1.5" height="5.0" fill="#6e98cc"/>
<rect x="140.0" y="33.0" width="1.5" height="5.0" fill="#6e98cc"/>
<path d="M28 48 V40 H40 V48" stroke="#5b8fcc" stroke-width="1.6" fill="none"/>
<rect x="30.0" y="42.0" width="8.0" height="6.0" fill="#7d92aa" opacity="0.7"/>
<path d="M44 52 V44 H56 V52" stroke="#5b8fcc" stroke-width="1.6" fill="none"/>
<rect x="46.0" y="46.0" width="8.0" height="6.0" fill="#7d92aa" opacity="0.7"/>
<path d="M95 54 V46 H107 V54" stroke="#5b8fcc" stroke-width="1.6" fill="none"/>
<rect x="97.0" y="48.0" width="8.0" height="6.0" fill="#7d92aa" opacity="0.7"/>
<path d="M110 56 V48 H122 V56" stroke="#5b8fcc" stroke-width="1.6" fill="none"/>
<rect x="112.0" y="50.0" width="8.0" height="6.0" fill="#7d92aa" opacity="0.7"/>
<path d="M140 50 V42 H152 V50" stroke="#5b8fcc" stroke-width="1.6" fill="none"/>
<rect x="142.0" y="44.0" width="8.0" height="6.0" fill="#7d92aa" opacity="0.7"/>
<path d="M158 56 V48 H170 V56" stroke="#5b8fcc" stroke-width="1.6" fill="none"/>
<rect x="160.0" y="50.0" width="8.0" height="6.0" fill="#7d92aa" opacity="0.7"/>
<path d="M10 58 V50 H22 V58" stroke="#5b8fcc" stroke-width="1.6" fill="none"/>
<rect x="12.0" y="52.0" width="8.0" height="6.0" fill="#7d92aa" opacity="0.7"/>
<rect x="0.0" y="52.0" width="3.4" height="3.2" fill="#7a8a96" opacity="0.8"/>
<rect x="3.8" y="52.0" width="3.4" height="3.2" fill="#4a8a70" opacity="0.8"/>
<rect x="7.6" y="52.0" width="3.4" height="3.2" fill="#4a8a70" opacity="0.8"/>
<rect x="11.4" y="52.0" width="3.4" height="3.2" fill="#d4d0c4" opacity="0.8"/>
<rect x="15.2" y="52.0" width="3.4" height="3.2" fill="#c8beb0" opacity="0.8"/>
<rect x="19.0" y="52.0" width="3.4" height="3.2" fill="#4a8a70" opacity="0.8"/>
<rect x="22.8" y="52.0" width="3.4" height="3.2" fill="#7a8a96" opacity="0.8"/>
<rect x="26.6" y="52.0" width="3.4" height="3.2" fill="#4a8a70" opacity="0.8"/>
<rect x="30.4" y="52.0" width="3.4" height="3.2" fill="#90a090" opacity="0.8"/>
<rect x="34.2" y="52.0" width="3.4" height="3.2" fill="#c8beb0" opacity="0.8"/>
<rect x="38.0" y="52.0" width="3.4" height="3.2" fill="#d4d0c4" opacity="0.8"/>
<rect x="41.8" y="52.0" width="3.4" height="3.2" fill="#a86a6e" opacity="0.8"/>
<rect x="45.6" y="52.0" width="3.4" height="3.2" fill="#5a9a80" opacity="0.8"/>
<rect x="49.4" y="52.0" width="3.4" height="3.2" fill="#d4d0c4" opacity="0.8"/>
<rect x="53.2" y="52.0" width="3.4" height="3.2" fill="#5a9a80" opacity="0.8"/>
<rect x="57.0" y="52.0" width="3.4" height="3.2" fill="#5a9a80" opacity="0.8"/>
<rect x="60.8" y="52.0" width="3.4" height="3.2" fill="#d4d0c4" opacity="0.8"/>
<rect x="64.6" y="52.0" width="3.4" height="3.2" fill="#a86a6e" opacity="0.8"/>
<rect x="68.4" y="52.0" width="3.4" height="3.2" fill="#90a090" opacity="0.8"/>
<rect x="72.2" y="52.0" width="3.4" height="3.2" fill="#a86a6e" opacity="0.8"/>
<rect x="76.0" y="52.0" width="3.4" height="3.2" fill="#7a8a96" opacity="0.8"/>
<rect x="79.8" y="52.0" width="3.4" height="3.2" fill="#a86a6e" opacity="0.8"/>
<rect x="83.6" y="52.0" width="3.4" height="3.2" fill="#90a090" opacity="0.8"/>
<rect x="87.4" y="52.0" width="3.4" height="3.2" fill="#d4d0c4" opacity="0.8"/>
<rect x="91.2" y="52.0" width="3.4" height="3.2" fill="#d4d0c4" opacity="0.8"/>
<rect x="95.0" y="52.0" width="3.4" height="3.2" fill="#4a8a70" opacity="0.8"/>
<rect x="98.8" y="52.0" width="3.4" height="3.2" fill="#c8beb0" opacity="0.8"/>
<rect x="102.6" y="52.0" width="3.4" height="3.2" fill="#90a090" opacity="0.8"/>
<rect x="106.4" y="52.0" width="3.4" height="3.2" fill="#90a090" opacity="0.8"/>
<rect x="110.2" y="52.0" width="3.4" height="3.2" fill="#7a8a96" opacity="0.8"/>
<rect x="114.0" y="52.0" width="3.4" height="3.2" fill="#b8808a" opacity="0.8"/>
<rect x="117.8" y="52.0" width="3.4" height="3.2" fill="#d4d0c4" opacity="0.8"/>
<rect x="121.6" y="52.0" width="3.4" height="3.2" fill="#90a090" opacity="0.8"/>
<rect x="125.4" y="52.0" width="3.4" height="3.2" fill="#b8808a" opacity="0.8"/>
<rect x="129.2" y="52.0" width="3.4" height="3.2" fill="#a86a6e" opacity="0.8"/>
<rect x="133.0" y="52.0" width="3.4" height="3.2" fill="#c8beb0" opacity="0.8"/>
<rect x="136.8" y="52.0" width="3.4" height="3.2" fill="#d4d0c4" opacity="0.8"/>
<rect x="140.6" y="52.0" width="3.4" height="3.2" fill="#5a9a80" opacity="0.8"/>
<rect x="144.4" y="52.0" width="3.4" height="3.2" fill="#4a8a70" opacity="0.8"/>
<rect x="148.2" y="52.0" width="3.4" height="3.2" fill="#7a8a96" opacity="0.8"/>
<rect x="152.0" y="52.0" width="3.4" height="3.2" fill="#5a9a80" opacity="0.8"/>
<rect x="155.8" y="52.0" width="3.4" height="3.2" fill="#5a9a80" opacity="0.8"/>
<rect x="159.6" y="52.0" width="3.4" height="3.2" fill="#c8beb0" opacity="0.8"/>
<rect x="163.4" y="52.0" width="3.4" height="3.2" fill="#7a8a96" opacity="0.8"/>
<rect x="167.2" y="52.0" width="3.4" height="3.2" fill="#c8beb0" opacity="0.8"/>
<rect x="171.0" y="52.0" width="3.4" height="3.2" fill="#5a9a80" opacity="0.8"/>
<rect x="174.8" y="52.0" width="3.4" height="3.2" fill="#4a8a70" opacity="0.8"/>
<rect x="178.6" y="52.0" width="3.4" height="3.2" fill="#b8808a" opacity="0.8"/>
<rect x="182.4" y="52.0" width="3.4" height="3.2" fill="#b8808a" opacity="0.8"/>
<rect x="186.2" y="52.0" width="3.4" height="3.2" fill="#c8beb0" opacity="0.8"/>
<rect x="190.0" y="52.0" width="3.4" height="3.2" fill="#90a090" opacity="0.8"/>
<rect x="193.8" y="52.0" width="3.4" height="3.2" fill="#a86a6e" opacity="0.8"/>
<rect x="197.6" y="52.0" width="3.4" height="3.2" fill="#90a090" opacity="0.8"/>
<rect x="201.4" y="52.0" width="3.4" height="3.2" fill="#a86a6e" opacity="0.8"/>
<rect x="205.2" y="52.0" width="3.4" height="3.2" fill="#4a8a70" opacity="0.8"/>
<rect x="209.0" y="52.0" width="3.4" height="3.2" fill="#c8beb0" opacity="0.8"/>
<rect x="212.8" y="52.0" width="3.4" height="3.2" fill="#d4d0c4" opacity="0.8"/>
<rect x="216.6" y="52.0" width="3.4" height="3.2" fill="#5a9a80" opacity="0.8"/>
<rect x="220.4" y="52.0" width="3.4" height="3.2" fill="#d4d0c4" opacity="0.8"/>
<rect x="1.9" y="55.6" width="3.4" height="3.2" fill="#d4d0c4" opacity="0.8"/>
<rect x="5.7" y="55.6" width="3.4" height="3.2" fill="#7a8a96" opacity="0.8"/>
<rect x="9.5" y="55.6" width="3.4" height="3.2" fill="#c8beb0" opacity="0.8"/>
<rect x="13.3" y="55.6" width="3.4" height="3.2" fill="#c8beb0" opacity="0.8"/>
<rect x="17.1" y="55.6" width="3.4" height="3.2" fill="#c8beb0" opacity="0.8"/>
<rect x="20.9" y="55.6" width="3.4" height="3.2" fill="#7a8a96" opacity="0.8"/>
<rect x="24.7" y="55.6" width="3.4" height="3.2" fill="#c8beb0" opacity="0.8"/>
<rect x="28.5" y="55.6" width="3.4" height="3.2" fill="#b8808a" opacity="0.8"/>
<rect x="32.3" y="55.6" width="3.4" height="3.2" fill="#7a8a96" opacity="0.8"/>
<rect x="36.1" y="55.6" width="3.4" height="3.2" fill="#b8808a" opacity="0.8"/>
<rect x="39.9" y="55.6" width="3.4" height="3.2" fill="#b8808a" opacity="0.8"/>
<rect x="43.7" y="55.6" width="3.4" height="3.2" fill="#c8beb0" opacity="0.8"/>
<rect x="47.5" y="55.6" width="3.4" height="3.2" fill="#c8beb0" opacity="0.8"/>
<rect x="51.3" y="55.6" width="3.4" height="3.2" fill="#c8beb0" opacity="0.8"/>
<rect x="55.1" y="55.6" width="3.4" height="3.2" fill="#a86a6e" opacity="0.8"/>
<rect x="58.9" y="55.6" width="3.4" height="3.2" fill="#7a8a96" opacity="0.8"/>
<rect x="62.7" y="55.6" width="3.4" height="3.2" fill="#c8beb0" opacity="0.8"/>
<rect x="66.5" y="55.6" width="3.4" height="3.2" fill="#7a8a96" opacity="0.8"/>
<rect x="70.3" y="55.6" width="3.4" height="3.2" fill="#a86a6e" opacity="0.8"/>
<rect x="74.1" y="55.6" width="3.4" height="3.2" fill="#4a8a70" opacity="0.8"/>
<rect x="77.9" y="55.6" width="3.4" height="3.2" fill="#d4d0c4" opacity="0.8"/>
<rect x="81.7" y="55.6" width="3.4" height="3.2" fill="#a86a6e" opacity="0.8"/>
<rect x="85.5" y="55.6" width="3.4" height="3.2" fill="#d4d0c4" opacity="0.8"/>
<rect x="89.3" y="55.6" width="3.4" height="3.2" fill="#d4d0c4" opacity="0.8"/>
<rect x="93.1" y="55.6" width="3.4" height="3.2" fill="#7a8a96" opacity="0.8"/>
<rect x="96.9" y="55.6" width="3.4" height="3.2" fill="#c8beb0" opacity="0.8"/>
<rect x="100.7" y="55.6" width="3.4" height="3.2" fill="#d4d0c4" opacity="0.8"/>
<rect x="104.5" y="55.6" width="3.4" height="3.2" fill="#5a9a80" opacity="0.8"/>
<rect x="108.3" y="55.6" width="3.4" height="3.2" fill="#a86a6e" opacity="0.8"/>
<rect x="112.1" y="55.6" width="3.4" height="3.2" fill="#c8beb0" opacity="0.8"/>
<rect x="115.9" y="55.6" width="3.4" height="3.2" fill="#b8808a" opacity="0.8"/>
<rect x="119.7" y="55.6" width="3.4" height="3.2" fill="#b8808a" opacity="0.8"/>
<rect x="123.5" y="55.6" width="3.4" height="3.2" fill="#a86a6e" opacity="0.8"/>
<rect x="127.3" y="55.6" width="3.4" height="3.2" fill="#b8808a" opacity="0.8"/>
<rect x="131.1" y="55.6" width="3.4" height="3.2" fill="#c8beb0" opacity="0.8"/>
<rect x="134.9" y="55.6" width="3.4" height="3.2" fill="#a86a6e" opacity="0.8"/>
<rect x="138.7" y="55.6" width="3.4" height="3.2" fill="#90a090" opacity="0.8"/>
<rect x="142.5" y="55.6" width="3.4" height="3.2" fill="#a86a6e" opacity="0.8"/>
<rect x="146.3" y="55.6" width="3.4" height="3.2" fill="#5a9a80" opacity="0.8"/>
<rect x="150.1" y="55.6" width="3.4" height="3.2" fill="#5a9a80" opacity="0.8"/>
<rect x="153.9" y="55.6" width="3.4" height="3.2" fill="#90a090" opacity="0.8"/>
<rect x="157.7" y="55.6" width="3.4" height="3.2" fill="#7a8a96" opacity="0.8"/>
<rect x="161.5" y="55.6" width="3.4" height="3.2" fill="#c8beb0" opacity="0.8"/>
<rect x="165.3" y="55.6" width="3.4" height="3.2" fill="#7a8a96" opacity="0.8"/>
<rect x="169.1" y="55.6" width="3.4" height="3.2" fill="#a86a6e" opacity="0.8"/>
<rect x="172.9" y="55.6" width="3.4" height="3.2" fill="#c8beb0" opacity="0.8"/>
<rect x="176.7" y="55.6" width="3.4" height="3.2" fill="#7a8a96" opacity="0.8"/>
<rect x="180.5" y="55.6" width="3.4" height="3.2" fill="#7a8a96" opacity="0.8"/>
<rect x="184.3" y="55.6" width="3.4" height="3.2" fill="#4a8a70" opacity="0.8"/>
<rect x="188.1" y="55.6" width="3.4" height="3.2" fill="#a86a6e" opacity="0.8"/>
<rect x="191.9" y="55.6" width="3.4" height="3.2" fill="#5a9a80" opacity="0.8"/>
<rect x="195.7" y="55.6" width="3.4" height="3.2" fill="#7a8a96" opacity="0.8"/>
<rect x="199.5" y="55.6" width="3.4" height="3.2" fill="#90a090" opacity="0.8"/>
<rect x="203.3" y="55.6" width="3.4" height="3.2" fill="#a86a6e" opacity="0.8"/>
<rect x="207.1" y="55.6" width="3.4" height="3.2" fill="#a86a6e" opacity="0.8"/>
<rect x="210.9" y="55.6" width="3.4" height="3.2" fill="#b8808a" opacity="0.8"/>
<rect x="214.7" y="55.6" width="3.4" height="3.2" fill="#d4d0c4" opacity="0.8"/>
<rect x="218.5" y="55.6" width="3.4" height="3.2" fill="#90a090" opacity="0.8"/>
<rect x="0.0" y="59.2" width="3.4" height="3.2" fill="#d4d0c4" opacity="0.8"/>
<rect x="3.8" y="59.2" width="3.4" height="3.2" fill="#b8808a" opacity="0.8"/>
<rect x="7.6" y="59.2" width="3.4" height="3.2" fill="#d4d0c4" opacity="0.8"/>
<rect x="11.4" y="59.2" width="3.4" height="3.2" fill="#c8beb0" opacity="0.8"/>
<rect x="15.2" y="59.2" width="3.4" height="3.2" fill="#b8808a" opacity="0.8"/>
<rect x="19.0" y="59.2" width="3.4" height="3.2" fill="#5a9a80" opacity="0.8"/>
<rect x="22.8" y="59.2" width="3.4" height="3.2" fill="#5a9a80" opacity="0.8"/>
<rect x="26.6" y="59.2" width="3.4" height="3.2" fill="#c8beb0" opacity="0.8"/>
<rect x="30.4" y="59.2" width="3.4" height="3.2" fill="#7a8a96" opacity="0.8"/>
<rect x="34.2" y="59.2" width="3.4" height="3.2" fill="#d4d0c4" opacity="0.8"/>
<rect x="38.0" y="59.2" width="3.4" height="3.2" fill="#90a090" opacity="0.8"/>
<rect x="41.8" y="59.2" width="3.4" height="3.2" fill="#b8808a" opacity="0.8"/>
<rect x="45.6" y="59.2" width="3.4" height="3.2" fill="#b8808a" opacity="0.8"/>
<rect x="49.4" y="59.2" width="3.4" height="3.2" fill="#d4d0c4" opacity="0.8"/>
<rect x="53.2" y="59.2" width="3.4" height="3.2" fill="#c8beb0" opacity="0.8"/>
<rect x="57.0" y="59.2" width="3.4" height="3.2" fill="#7a8a96" opacity="0.8"/>
<rect x="60.8" y="59.2" width="3.4" height="3.2" fill="#a86a6e" opacity="0.8"/>
<rect x="64.6" y="59.2" width="3.4" height="3.2" fill="#5a9a80" opacity="0.8"/>
<rect x="68.4" y="59.2" width="3.4" height="3.2" fill="#b8808a" opacity="0.8"/>
<rect x="72.2" y="59.2" width="3.4" height="3.2" fill="#a86a6e" opacity="0.8"/>
<rect x="76.0" y="59.2" width="3.4" height="3.2" fill="#d4d0c4" opacity="0.8"/>
<rect x="79.8" y="59.2" width="3.4" height="3.2" fill="#c8beb0" opacity="0.8"/>
<rect x="83.6" y="59.2" width="3.4" height="3.2" fill="#b8808a" opacity="0.8"/>
<rect x="87.4" y="59.2" width="3.4" height="3.2" fill="#4a8a70" opacity="0.8"/>
<rect x="91.2" y="59.2" width="3.4" height="3.2" fill="#4a8a70" opacity="0.8"/>
<rect x="95.0" y="59.2" width="3.4" height="3.2" fill="#a86a6e" opacity="0.8"/>
<rect x="98.8" y="59.2" width="3.4" height="3.2" fill="#7a8a96" opacity="0.8"/>
<rect x="102.6" y="59.2" width="3.4" height="3.2" fill="#d4d0c4" opacity="0.8"/>
<rect x="106.4" y="59.2" width="3.4" height="3.2" fill="#7a8a96" opacity="0.8"/>
<rect x="110.2" y="59.2" width="3.4" height="3.2" fill="#b8808a" opacity="0.8"/>
<rect x="114.0" y="59.2" width="3.4" height="3.2" fill="#b8808a" opacity="0.8"/>
<rect x="117.8" y="59.2" width="3.4" height="3.2" fill="#d4d0c4" opacity="0.8"/>
<rect x="121.6" y="59.2" width="3.4" height="3.2" fill="#7a8a96" opacity="0.8"/>
<rect x="125.4" y="59.2" width="3.4" height="3.2" fill="#d4d0c4" opacity="0.8"/>
<rect x="129.2" y="59.2" width="3.4" height="3.2" fill="#c8beb0" opacity="0.8"/>
<rect x="133.0" y="59.2" width="3.4" height="3.2" fill="#7a8a96" opacity="0.8"/>
<rect x="136.8" y="59.2" width="3.4" height="3.2" fill="#a86a6e" opacity="0.8"/>
<rect x="140.6" y="59.2" width="3.4" height="3.2" fill="#b8808a" opacity="0.8"/>
<rect x="144.4" y="59.2" width="3.4" height="3.2" fill="#4a8a70" opacity="0.8"/>
<rect x="148.2" y="59.2" width="3.4" height="3.2" fill="#90a090" opacity="0.8"/>
<rect x="152.0" y="59.2" width="3.4" height="3.2" fill="#a86a6e" opacity="0.8"/>
<rect x="155.8" y="59.2" width="3.4" height="3.2" fill="#5a9a80" opacity="0.8"/>
<rect x="159.6" y="59.2" width="3.4" height="3.2" fill="#b8808a" opacity="0.8"/>
<rect x="163.4" y="59.2" width="3.4" height="3.2" fill="#5a9a80" opacity="0.8"/>
<rect x="167.2" y="59.2" width="3.4" height="3.2" fill="#c8beb0" opacity="0.8"/>
<rect x="171.0" y="59.2" width="3.4" height="3.2" fill="#4a8a70" opacity="0.8"/>
<rect x="174.8" y="59.2" width="3.4" height="3.2" fill="#4a8a70" opacity="0.8"/>
<rect x="178.6" y="59.2" width="3.4" height="3.2" fill="#b8808a" opacity="0.8"/>
<rect x="182.4" y="59.2" width="3.4" height="3.2" fill="#c8beb0" opacity="0.8"/>
<rect x="186.2" y="59.2" width="3.4" height="3.2" fill="#d4d0c4" opacity="0.8"/>
<rect x="190.0" y="59.2" width="3.4" height="3.2" fill="#7a8a96" opacity="0.8"/>
<rect x="193.8" y="59.2" width="3.4" height="3.2" fill="#a86a6e" opacity="0.8"/>
<rect x="197.6" y="59.2" width="3.4" height="3.2" fill="#d4d0c4" opacity="0.8"/>
<rect x="201.4" y="59.2" width="3.4" height="3.2" fill="#90a090" opacity="0.8"/>
<rect x="205.2" y="59.2" width="3.4" height="3.2" fill="#c8beb0" opacity="0.8"/>
<rect x="209.0" y="59.2" width="3.4" height="3.2" fill="#a86a6e" opacity="0.8"/>
<rect x="212.8" y="59.2" width="3.4" height="3.2" fill="#d4d0c4" opacity="0.8"/>
<rect x="216.6" y="59.2" width="3.4" height="3.2" fill="#5a9a80" opacity="0.8"/>
<rect x="220.4" y="59.2" width="3.4" height="3.2" fill="#a86a6e" opacity="0.8"/>
<path d="M47 54 L41 104 M70 54 L76 102 M47 54 H70 M45 74 H72" stroke="#3a7fd0" stroke-width="2.6" fill="none"/>
<path d="M47 56 L74 92 M70 56 L43 92 M43 92 L29 106 M74 92 L84 104" stroke="#3a7fd0" stroke-width="1.5" fill="none"/>
<rect x="48" y="61" width="21" height="9" rx="3" fill="#e6e4de"/>
<path d="M76 54 L70 104 M93 54 L99 102 M76 54 H93 M74 74 H95" stroke="#3a7fd0" stroke-width="2.6" fill="none"/>
<path d="M76 56 L97 92 M93 56 L72 92 M72 92 L58 106 M97 92 L107 104" stroke="#3a7fd0" stroke-width="1.5" fill="none"/>
<rect x="77" y="61" width="15" height="9" rx="3" fill="#e6e4de"/>
<path d="M101 54 L95 104 M118 54 L124 102 M101 54 H118 M99 74 H120" stroke="#3a7fd0" stroke-width="2.6" fill="none"/>
<path d="M101 56 L122 92 M118 56 L97 92 M97 92 L83 106 M122 92 L132 104" stroke="#3a7fd0" stroke-width="1.5" fill="none"/>
<rect x="102" y="61" width="15" height="9" rx="3" fill="#e6e4de"/>
<path d="M140 54 L134 104 M160 54 L166 102 M140 54 H160 M138 74 H162" stroke="#3a7fd0" stroke-width="2.6" fill="none"/>
<path d="M140 56 L164 92 M160 56 L136 92 M136 92 L122 106 M164 92 L174 104" stroke="#3a7fd0" stroke-width="1.5" fill="none"/>
<rect x="141" y="61" width="18" height="9" rx="3" fill="#e6e4de"/>
<path d="M164 54 L158 104 M184 54 L190 102 M164 54 H184 M162 74 H186" stroke="#3a7fd0" stroke-width="2.6" fill="none"/>
<path d="M164 56 L188 92 M184 56 L160 92 M160 92 L146 106 M188 92 L198 104" stroke="#3a7fd0" stroke-width="1.5" fill="none"/>
<rect x="165" y="61" width="18" height="9" rx="3" fill="#e6e4de"/>
<path d="M188 54 L182 104 M208 54 L214 102 M188 54 H208 M186 74 H210" stroke="#3a7fd0" stroke-width="2.6" fill="none"/>
<path d="M188 56 L212 92 M208 56 L184 92 M184 92 L170 106 M212 92 L222 104" stroke="#3a7fd0" stroke-width="1.5" fill="none"/>
<rect x="189" y="61" width="18" height="9" rx="3" fill="#e6e4de"/>
<path d="M205 55 L222 96" stroke="#3a7fd0" stroke-width="2.2"/>
<path d="M0 88 H206 L222 104 L216 121 H0z" fill="#57534a"/>
<rect x="0.0" y="95.0" width="7.5" height="2.6" fill="#b65656" opacity="0.95"/>
<rect x="0.0" y="98.0" width="7.5" height="2.6" fill="#8a6a5a" opacity="0.95"/>
<rect x="0.0" y="101.0" width="7.5" height="2.6" fill="#3f669a" opacity="0.95"/>
<rect x="0.0" y="104.0" width="7.5" height="2.6" fill="#c4c0b4" opacity="0.95"/>
<rect x="0.0" y="107.0" width="7.5" height="2.6" fill="#5a9078" opacity="0.95"/>
<rect x="0.0" y="110.0" width="7.5" height="2.6" fill="#7a3a40" opacity="0.95"/>
<rect x="0.0" y="113.0" width="7.5" height="2.6" fill="#6a80a8" opacity="0.95"/>
<rect x="0.0" y="116.0" width="7.5" height="2.6" fill="#a8464c" opacity="0.95"/>
<rect x="0.0" y="119.0" width="7.5" height="2.6" fill="#3f669a" opacity="0.95"/>
<rect x="9.1" y="93.0" width="7.5" height="2.6" fill="#a8464c" opacity="0.95"/>
<rect x="9.1" y="96.0" width="7.5" height="2.6" fill="#b65656" opacity="0.95"/>
<rect x="9.1" y="99.0" width="7.5" height="2.6" fill="#c4c0b4" opacity="0.95"/>
<rect x="9.1" y="102.0" width="7.5" height="2.6" fill="#c4c0b4" opacity="0.95"/>
<rect x="9.1" y="105.0" width="7.5" height="2.6" fill="#c4c0b4" opacity="0.95"/>
<rect x="9.1" y="108.0" width="7.5" height="2.6" fill="#cfcabf" opacity="0.95"/>
<rect x="9.1" y="111.0" width="7.5" height="2.6" fill="#6a80a8" opacity="0.95"/>
<rect x="9.1" y="114.0" width="7.5" height="2.6" fill="#6a80a8" opacity="0.95"/>
<rect x="9.1" y="117.0" width="7.5" height="2.6" fill="#6a80a8" opacity="0.95"/>
<rect x="18.2" y="93.0" width="7.5" height="2.6" fill="#6a80a8" opacity="0.95"/>
<rect x="18.2" y="96.0" width="7.5" height="2.6" fill="#a8a49c" opacity="0.95"/>
<rect x="18.2" y="99.0" width="7.5" height="2.6" fill="#b65656" opacity="0.95"/>
<rect x="18.2" y="102.0" width="7.5" height="2.6" fill="#9a5058" opacity="0.95"/>
<rect x="18.2" y="105.0" width="7.5" height="2.6" fill="#5a9078" opacity="0.95"/>
<rect x="18.2" y="108.0" width="7.5" height="2.6" fill="#9a5058" opacity="0.95"/>
<rect x="18.2" y="111.0" width="7.5" height="2.6" fill="#b65656" opacity="0.95"/>
<rect x="18.2" y="114.0" width="7.5" height="2.6" fill="#6a80a8" opacity="0.95"/>
<rect x="18.2" y="117.0" width="7.5" height="2.6" fill="#a8a49c" opacity="0.95"/>
<rect x="27.3" y="89.0" width="7.5" height="2.6" fill="#7a3a40" opacity="0.95"/>
<rect x="27.3" y="92.0" width="7.5" height="2.6" fill="#4a8a6a" opacity="0.95"/>
<rect x="27.3" y="95.0" width="7.5" height="2.6" fill="#7a3a40" opacity="0.95"/>
<rect x="27.3" y="98.0" width="7.5" height="2.6" fill="#5a9078" opacity="0.95"/>
<rect x="27.3" y="101.0" width="7.5" height="2.6" fill="#4a8a6a" opacity="0.95"/>
<rect x="27.3" y="104.0" width="7.5" height="2.6" fill="#5a9078" opacity="0.95"/>
<rect x="27.3" y="107.0" width="7.5" height="2.6" fill="#6a80a8" opacity="0.95"/>
<rect x="27.3" y="110.0" width="7.5" height="2.6" fill="#a8a49c" opacity="0.95"/>
<rect x="27.3" y="113.0" width="7.5" height="2.6" fill="#a8a49c" opacity="0.95"/>
<rect x="27.3" y="116.0" width="7.5" height="2.6" fill="#a8464c" opacity="0.95"/>
<rect x="27.3" y="119.0" width="7.5" height="2.6" fill="#7a3a40" opacity="0.95"/>
<rect x="36.4" y="93.0" width="7.5" height="2.6" fill="#7a3a40" opacity="0.95"/>
<rect x="36.4" y="96.0" width="7.5" height="2.6" fill="#c4c0b4" opacity="0.95"/>
<rect x="36.4" y="99.0" width="7.5" height="2.6" fill="#6a80a8" opacity="0.95"/>
<rect x="36.4" y="102.0" width="7.5" height="2.6" fill="#7a3a40" opacity="0.95"/>
<rect x="36.4" y="105.0" width="7.5" height="2.6" fill="#a8a49c" opacity="0.95"/>
<rect x="36.4" y="108.0" width="7.5" height="2.6" fill="#c4c0b4" opacity="0.95"/>
<rect x="36.4" y="111.0" width="7.5" height="2.6" fill="#cfcabf" opacity="0.95"/>
<rect x="36.4" y="114.0" width="7.5" height="2.6" fill="#6a80a8" opacity="0.95"/>
<rect x="36.4" y="117.0" width="7.5" height="2.6" fill="#c4c0b4" opacity="0.95"/>
<rect x="45.5" y="93.0" width="7.5" height="2.6" fill="#9a5058" opacity="0.95"/>
<rect x="45.5" y="96.0" width="7.5" height="2.6" fill="#c4c0b4" opacity="0.95"/>
<rect x="45.5" y="99.0" width="7.5" height="2.6" fill="#6a80a8" opacity="0.95"/>
<rect x="45.5" y="102.0" width="7.5" height="2.6" fill="#c4c0b4" opacity="0.95"/>
<rect x="45.5" y="105.0" width="7.5" height="2.6" fill="#9a5058" opacity="0.95"/>
<rect x="45.5" y="108.0" width="7.5" height="2.6" fill="#8a6a5a" opacity="0.95"/>
<rect x="45.5" y="111.0" width="7.5" height="2.6" fill="#8a6a5a" opacity="0.95"/>
<rect x="45.5" y="114.0" width="7.5" height="2.6" fill="#c4c0b4" opacity="0.95"/>
<rect x="45.5" y="117.0" width="7.5" height="2.6" fill="#a8464c" opacity="0.95"/>
<rect x="54.6" y="89.0" width="7.5" height="2.6" fill="#3f669a" opacity="0.95"/>
<rect x="54.6" y="92.0" width="7.5" height="2.6" fill="#a8a49c" opacity="0.95"/>
<rect x="54.6" y="95.0" width="7.5" height="2.6" fill="#a8464c" opacity="0.95"/>
<rect x="54.6" y="98.0" width="7.5" height="2.6" fill="#9a5058" opacity="0.95"/>
<rect x="54.6" y="101.0" width="7.5" height="2.6" fill="#4a8a6a" opacity="0.95"/>
<rect x="54.6" y="104.0" width="7.5" height="2.6" fill="#7a3a40" opacity="0.95"/>
<rect x="54.6" y="107.0" width="7.5" height="2.6" fill="#9a5058" opacity="0.95"/>
<rect x="54.6" y="110.0" width="7.5" height="2.6" fill="#7a3a40" opacity="0.95"/>
<rect x="54.6" y="113.0" width="7.5" height="2.6" fill="#a8464c" opacity="0.95"/>
<rect x="54.6" y="116.0" width="7.5" height="2.6" fill="#cfcabf" opacity="0.95"/>
<rect x="54.6" y="119.0" width="7.5" height="2.6" fill="#8a6a5a" opacity="0.95"/>
<rect x="63.7" y="93.0" width="7.5" height="2.6" fill="#a8464c" opacity="0.95"/>
<rect x="63.7" y="96.0" width="7.5" height="2.6" fill="#a8a49c" opacity="0.95"/>
<rect x="63.7" y="99.0" width="7.5" height="2.6" fill="#8a6a5a" opacity="0.95"/>
<rect x="63.7" y="102.0" width="7.5" height="2.6" fill="#cfcabf" opacity="0.95"/>
<rect x="63.7" y="105.0" width="7.5" height="2.6" fill="#b65656" opacity="0.95"/>
<rect x="63.7" y="108.0" width="7.5" height="2.6" fill="#3f669a" opacity="0.95"/>
<rect x="63.7" y="111.0" width="7.5" height="2.6" fill="#7a3a40" opacity="0.95"/>
<rect x="63.7" y="114.0" width="7.5" height="2.6" fill="#8a6a5a" opacity="0.95"/>
<rect x="63.7" y="117.0" width="7.5" height="2.6" fill="#5a9078" opacity="0.95"/>
<rect x="72.8" y="91.0" width="7.5" height="2.6" fill="#3f669a" opacity="0.95"/>
<rect x="72.8" y="94.0" width="7.5" height="2.6" fill="#a8464c" opacity="0.95"/>
<rect x="72.8" y="97.0" width="7.5" height="2.6" fill="#6a80a8" opacity="0.95"/>
<rect x="72.8" y="100.0" width="7.5" height="2.6" fill="#b65656" opacity="0.95"/>
<rect x="72.8" y="103.0" width="7.5" height="2.6" fill="#8a6a5a" opacity="0.95"/>
<rect x="72.8" y="106.0" width="7.5" height="2.6" fill="#5a9078" opacity="0.95"/>
<rect x="72.8" y="109.0" width="7.5" height="2.6" fill="#4a8a6a" opacity="0.95"/>
<rect x="72.8" y="112.0" width="7.5" height="2.6" fill="#3f669a" opacity="0.95"/>
<rect x="72.8" y="115.0" width="7.5" height="2.6" fill="#a8a49c" opacity="0.95"/>
<rect x="72.8" y="118.0" width="7.5" height="2.6" fill="#8a6a5a" opacity="0.95"/>
<rect x="81.9" y="89.0" width="7.5" height="2.6" fill="#a8464c" opacity="0.95"/>
<rect x="81.9" y="92.0" width="7.5" height="2.6" fill="#a8a49c" opacity="0.95"/>
<rect x="81.9" y="95.0" width="7.5" height="2.6" fill="#7a3a40" opacity="0.95"/>
<rect x="81.9" y="98.0" width="7.5" height="2.6" fill="#5a9078" opacity="0.95"/>
<rect x="81.9" y="101.0" width="7.5" height="2.6" fill="#b65656" opacity="0.95"/>
<rect x="81.9" y="104.0" width="7.5" height="2.6" fill="#3f669a" opacity="0.95"/>
<rect x="81.9" y="107.0" width="7.5" height="2.6" fill="#a8464c" opacity="0.95"/>
<rect x="81.9" y="110.0" width="7.5" height="2.6" fill="#cfcabf" opacity="0.95"/>
<rect x="81.9" y="113.0" width="7.5" height="2.6" fill="#6a80a8" opacity="0.95"/>
<rect x="81.9" y="116.0" width="7.5" height="2.6" fill="#4a8a6a" opacity="0.95"/>
<rect x="81.9" y="119.0" width="7.5" height="2.6" fill="#b65656" opacity="0.95"/>
<rect x="91.0" y="91.0" width="7.5" height="2.6" fill="#5a9078" opacity="0.95"/>
<rect x="91.0" y="94.0" width="7.5" height="2.6" fill="#4a8a6a" opacity="0.95"/>
<rect x="91.0" y="97.0" width="7.5" height="2.6" fill="#9a5058" opacity="0.95"/>
<rect x="91.0" y="100.0" width="7.5" height="2.6" fill="#7a3a40" opacity="0.95"/>
<rect x="91.0" y="103.0" width="7.5" height="2.6" fill="#5a9078" opacity="0.95"/>
<rect x="91.0" y="106.0" width="7.5" height="2.6" fill="#a8a49c" opacity="0.95"/>
<rect x="91.0" y="109.0" width="7.5" height="2.6" fill="#c4c0b4" opacity="0.95"/>
<rect x="91.0" y="112.0" width="7.5" height="2.6" fill="#9a5058" opacity="0.95"/>
<rect x="91.0" y="115.0" width="7.5" height="2.6" fill="#a8a49c" opacity="0.95"/>
<rect x="91.0" y="118.0" width="7.5" height="2.6" fill="#9a5058" opacity="0.95"/>
<rect x="100.1" y="93.0" width="7.5" height="2.6" fill="#cfcabf" opacity="0.95"/>
<rect x="100.1" y="96.0" width="7.5" height="2.6" fill="#8a6a5a" opacity="0.95"/>
<rect x="100.1" y="99.0" width="7.5" height="2.6" fill="#6a80a8" opacity="0.95"/>
<rect x="100.1" y="102.0" width="7.5" height="2.6" fill="#4a8a6a" opacity="0.95"/>
<rect x="100.1" y="105.0" width="7.5" height="2.6" fill="#c4c0b4" opacity="0.95"/>
<rect x="100.1" y="108.0" width="7.5" height="2.6" fill="#8a6a5a" opacity="0.95"/>
<rect x="100.1" y="111.0" width="7.5" height="2.6" fill="#4a8a6a" opacity="0.95"/>
<rect x="100.1" y="114.0" width="7.5" height="2.6" fill="#3f669a" opacity="0.95"/>
<rect x="100.1" y="117.0" width="7.5" height="2.6" fill="#5a9078" opacity="0.95"/>
<rect x="109.2" y="89.0" width="7.5" height="2.6" fill="#6a80a8" opacity="0.95"/>
<rect x="109.2" y="92.0" width="7.5" height="2.6" fill="#c4c0b4" opacity="0.95"/>
<rect x="109.2" y="95.0" width="7.5" height="2.6" fill="#6a80a8" opacity="0.95"/>
<rect x="109.2" y="98.0" width="7.5" height="2.6" fill="#a8a49c" opacity="0.95"/>
<rect x="109.2" y="101.0" width="7.5" height="2.6" fill="#cfcabf" opacity="0.95"/>
<rect x="109.2" y="104.0" width="7.5" height="2.6" fill="#c4c0b4" opacity="0.95"/>
<rect x="109.2" y="107.0" width="7.5" height="2.6" fill="#c4c0b4" opacity="0.95"/>
<rect x="109.2" y="110.0" width="7.5" height="2.6" fill="#a8a49c" opacity="0.95"/>
<rect x="109.2" y="113.0" width="7.5" height="2.6" fill="#9a5058" opacity="0.95"/>
<rect x="109.2" y="116.0" width="7.5" height="2.6" fill="#8a6a5a" opacity="0.95"/>
<rect x="109.2" y="119.0" width="7.5" height="2.6" fill="#a8a49c" opacity="0.95"/>
<rect x="118.3" y="95.0" width="7.5" height="2.6" fill="#3f669a" opacity="0.95"/>
<rect x="118.3" y="98.0" width="7.5" height="2.6" fill="#9a5058" opacity="0.95"/>
<rect x="118.3" y="101.0" width="7.5" height="2.6" fill="#c4c0b4" opacity="0.95"/>
<rect x="118.3" y="104.0" width="7.5" height="2.6" fill="#3f669a" opacity="0.95"/>
<rect x="118.3" y="107.0" width="7.5" height="2.6" fill="#3f669a" opacity="0.95"/>
<rect x="118.3" y="110.0" width="7.5" height="2.6" fill="#3f669a" opacity="0.95"/>
<rect x="118.3" y="113.0" width="7.5" height="2.6" fill="#6a80a8" opacity="0.95"/>
<rect x="118.3" y="116.0" width="7.5" height="2.6" fill="#9a5058" opacity="0.95"/>
<rect x="118.3" y="119.0" width="7.5" height="2.6" fill="#3f669a" opacity="0.95"/>
<rect x="127.4" y="89.0" width="7.5" height="2.6" fill="#9a5058" opacity="0.95"/>
<rect x="127.4" y="92.0" width="7.5" height="2.6" fill="#a8464c" opacity="0.95"/>
<rect x="127.4" y="95.0" width="7.5" height="2.6" fill="#a8464c" opacity="0.95"/>
<rect x="127.4" y="98.0" width="7.5" height="2.6" fill="#c4c0b4" opacity="0.95"/>
<rect x="127.4" y="101.0" width="7.5" height="2.6" fill="#c4c0b4" opacity="0.95"/>
<rect x="127.4" y="104.0" width="7.5" height="2.6" fill="#7a3a40" opacity="0.95"/>
<rect x="127.4" y="107.0" width="7.5" height="2.6" fill="#a8464c" opacity="0.95"/>
<rect x="127.4" y="110.0" width="7.5" height="2.6" fill="#a8a49c" opacity="0.95"/>
<rect x="127.4" y="113.0" width="7.5" height="2.6" fill="#a8464c" opacity="0.95"/>
<rect x="127.4" y="116.0" width="7.5" height="2.6" fill="#b65656" opacity="0.95"/>
<rect x="127.4" y="119.0" width="7.5" height="2.6" fill="#3f669a" opacity="0.95"/>
<rect x="136.5" y="95.0" width="7.5" height="2.6" fill="#c4c0b4" opacity="0.95"/>
<rect x="136.5" y="98.0" width="7.5" height="2.6" fill="#b65656" opacity="0.95"/>
<rect x="136.5" y="101.0" width="7.5" height="2.6" fill="#b65656" opacity="0.95"/>
<rect x="136.5" y="104.0" width="7.5" height="2.6" fill="#9a5058" opacity="0.95"/>
<rect x="136.5" y="107.0" width="7.5" height="2.6" fill="#4a8a6a" opacity="0.95"/>
<rect x="136.5" y="110.0" width="7.5" height="2.6" fill="#6a80a8" opacity="0.95"/>
<rect x="136.5" y="113.0" width="7.5" height="2.6" fill="#3f669a" opacity="0.95"/>
<rect x="136.5" y="116.0" width="7.5" height="2.6" fill="#9a5058" opacity="0.95"/>
<rect x="136.5" y="119.0" width="7.5" height="2.6" fill="#cfcabf" opacity="0.95"/>
<rect x="145.6" y="93.0" width="7.5" height="2.6" fill="#5a9078" opacity="0.95"/>
<rect x="145.6" y="96.0" width="7.5" height="2.6" fill="#cfcabf" opacity="0.95"/>
<rect x="145.6" y="99.0" width="7.5" height="2.6" fill="#3f669a" opacity="0.95"/>
<rect x="145.6" y="102.0" width="7.5" height="2.6" fill="#cfcabf" opacity="0.95"/>
<rect x="145.6" y="105.0" width="7.5" height="2.6" fill="#cfcabf" opacity="0.95"/>
<rect x="145.6" y="108.0" width="7.5" height="2.6" fill="#5a9078" opacity="0.95"/>
<rect x="145.6" y="111.0" width="7.5" height="2.6" fill="#8a6a5a" opacity="0.95"/>
<rect x="145.6" y="114.0" width="7.5" height="2.6" fill="#4a8a6a" opacity="0.95"/>
<rect x="145.6" y="117.0" width="7.5" height="2.6" fill="#b65656" opacity="0.95"/>
<rect x="154.7" y="89.0" width="7.5" height="2.6" fill="#5a9078" opacity="0.95"/>
<rect x="154.7" y="92.0" width="7.5" height="2.6" fill="#a8a49c" opacity="0.95"/>
<rect x="154.7" y="95.0" width="7.5" height="2.6" fill="#3f669a" opacity="0.95"/>
<rect x="154.7" y="98.0" width="7.5" height="2.6" fill="#5a9078" opacity="0.95"/>
<rect x="154.7" y="101.0" width="7.5" height="2.6" fill="#7a3a40" opacity="0.95"/>
<rect x="154.7" y="104.0" width="7.5" height="2.6" fill="#8a6a5a" opacity="0.95"/>
<rect x="154.7" y="107.0" width="7.5" height="2.6" fill="#c4c0b4" opacity="0.95"/>
<rect x="154.7" y="110.0" width="7.5" height="2.6" fill="#7a3a40" opacity="0.95"/>
<rect x="154.7" y="113.0" width="7.5" height="2.6" fill="#4a8a6a" opacity="0.95"/>
<rect x="154.7" y="116.0" width="7.5" height="2.6" fill="#cfcabf" opacity="0.95"/>
<rect x="154.7" y="119.0" width="7.5" height="2.6" fill="#4a8a6a" opacity="0.95"/>
<rect x="163.8" y="95.0" width="7.5" height="2.6" fill="#cfcabf" opacity="0.95"/>
<rect x="163.8" y="98.0" width="7.5" height="2.6" fill="#c4c0b4" opacity="0.95"/>
<rect x="163.8" y="101.0" width="7.5" height="2.6" fill="#6a80a8" opacity="0.95"/>
<rect x="163.8" y="104.0" width="7.5" height="2.6" fill="#8a6a5a" opacity="0.95"/>
<rect x="163.8" y="107.0" width="7.5" height="2.6" fill="#4a8a6a" opacity="0.95"/>
<rect x="163.8" y="110.0" width="7.5" height="2.6" fill="#7a3a40" opacity="0.95"/>
<rect x="163.8" y="113.0" width="7.5" height="2.6" fill="#9a5058" opacity="0.95"/>
<rect x="163.8" y="116.0" width="7.5" height="2.6" fill="#cfcabf" opacity="0.95"/>
<rect x="163.8" y="119.0" width="7.5" height="2.6" fill="#a8a49c" opacity="0.95"/>
<rect x="172.9" y="89.0" width="7.5" height="2.6" fill="#5a9078" opacity="0.95"/>
<rect x="172.9" y="92.0" width="7.5" height="2.6" fill="#cfcabf" opacity="0.95"/>
<rect x="172.9" y="95.0" width="7.5" height="2.6" fill="#b65656" opacity="0.95"/>
<rect x="172.9" y="98.0" width="7.5" height="2.6" fill="#6a80a8" opacity="0.95"/>
<rect x="172.9" y="101.0" width="7.5" height="2.6" fill="#b65656" opacity="0.95"/>
<rect x="172.9" y="104.0" width="7.5" height="2.6" fill="#7a3a40" opacity="0.95"/>
<rect x="172.9" y="107.0" width="7.5" height="2.6" fill="#a8a49c" opacity="0.95"/>
<rect x="172.9" y="110.0" width="7.5" height="2.6" fill="#a8a49c" opacity="0.95"/>
<rect x="172.9" y="113.0" width="7.5" height="2.6" fill="#5a9078" opacity="0.95"/>
<rect x="172.9" y="116.0" width="7.5" height="2.6" fill="#9a5058" opacity="0.95"/>
<rect x="172.9" y="119.0" width="7.5" height="2.6" fill="#5a9078" opacity="0.95"/>
<rect x="182.0" y="91.0" width="7.5" height="2.6" fill="#a8464c" opacity="0.95"/>
<rect x="182.0" y="94.0" width="7.5" height="2.6" fill="#b65656" opacity="0.95"/>
<rect x="182.0" y="97.0" width="7.5" height="2.6" fill="#c4c0b4" opacity="0.95"/>
<rect x="182.0" y="100.0" width="7.5" height="2.6" fill="#3f669a" opacity="0.95"/>
<rect x="182.0" y="103.0" width="7.5" height="2.6" fill="#9a5058" opacity="0.95"/>
<rect x="182.0" y="106.0" width="7.5" height="2.6" fill="#a8a49c" opacity="0.95"/>
<rect x="182.0" y="109.0" width="7.5" height="2.6" fill="#b65656" opacity="0.95"/>
<rect x="182.0" y="112.0" width="7.5" height="2.6" fill="#8a6a5a" opacity="0.95"/>
<rect x="182.0" y="115.0" width="7.5" height="2.6" fill="#c4c0b4" opacity="0.95"/>
<rect x="182.0" y="118.0" width="7.5" height="2.6" fill="#5a9078" opacity="0.95"/>
<rect x="191.1" y="91.0" width="7.5" height="2.6" fill="#c4c0b4" opacity="0.95"/>
<rect x="191.1" y="94.0" width="7.5" height="2.6" fill="#4a8a6a" opacity="0.95"/>
<rect x="191.1" y="97.0" width="7.5" height="2.6" fill="#3f669a" opacity="0.95"/>
<rect x="191.1" y="100.0" width="7.5" height="2.6" fill="#cfcabf" opacity="0.95"/>
<rect x="191.1" y="103.0" width="7.5" height="2.6" fill="#9a5058" opacity="0.95"/>
<rect x="191.1" y="106.0" width="7.5" height="2.6" fill="#8a6a5a" opacity="0.95"/>
<rect x="191.1" y="109.0" width="7.5" height="2.6" fill="#cfcabf" opacity="0.95"/>
<rect x="191.1" y="112.0" width="7.5" height="2.6" fill="#cfcabf" opacity="0.95"/>
<rect x="191.1" y="115.0" width="7.5" height="2.6" fill="#b65656" opacity="0.95"/>
<rect x="191.1" y="118.0" width="7.5" height="2.6" fill="#cfcabf" opacity="0.95"/>
<rect x="200.2" y="93.0" width="7.5" height="2.6" fill="#a8a49c" opacity="0.95"/>
<rect x="200.2" y="96.0" width="7.5" height="2.6" fill="#a8a49c" opacity="0.95"/>
<rect x="200.2" y="99.0" width="7.5" height="2.6" fill="#9a5058" opacity="0.95"/>
<rect x="200.2" y="102.0" width="7.5" height="2.6" fill="#c4c0b4" opacity="0.95"/>
<rect x="200.2" y="105.0" width="7.5" height="2.6" fill="#5a9078" opacity="0.95"/>
<rect x="200.2" y="108.0" width="7.5" height="2.6" fill="#6a80a8" opacity="0.95"/>
<rect x="200.2" y="111.0" width="7.5" height="2.6" fill="#c4c0b4" opacity="0.95"/>
<rect x="200.2" y="114.0" width="7.5" height="2.6" fill="#5a9078" opacity="0.95"/>
<rect x="200.2" y="117.0" width="6.3" height="2.6" fill="#cfcabf" opacity="0.95"/>
<rect x="209.3" y="89.0" width="2.7" height="2.6" fill="#7a3a40" opacity="0.95"/>
<rect x="209.3" y="92.0" width="2.7" height="2.6" fill="#8a6a5a" opacity="0.95"/>
<rect x="209.3" y="95.0" width="2.7" height="2.6" fill="#6a80a8" opacity="0.95"/>
<rect x="209.3" y="98.0" width="2.7" height="2.6" fill="#3f669a" opacity="0.95"/>
<rect x="209.3" y="101.0" width="2.7" height="2.6" fill="#b65656" opacity="0.95"/>
<rect x="209.3" y="104.0" width="2.7" height="2.6" fill="#cfcabf" opacity="0.95"/>
<rect x="209.3" y="107.0" width="2.2" height="2.6" fill="#cfcabf" opacity="0.95"/>
<rect x="209.3" y="110.0" width="0.7" height="2.6" fill="#a8464c" opacity="0.95"/>
<rect x="148.0" y="82.0" width="7.0" height="38.0" fill="#e6ebe4"/>
<rect x="151.0" y="80.0" width="3.0" height="4.0" fill="#5aa070"/>
<path d="M0 120 H210 L222 108 L215 129 H0z" fill="#d0dae0"/>
<path d="M0 129 H212" stroke="#9a5a55" stroke-width="1.2"/>
<circle cx="50" cy="124.5" r="2.2" fill="#2f7ed0"/>
<circle cx="72" cy="124.5" r="2.2" fill="#2f7ed0"/>
<circle cx="94" cy="124.5" r="2.2" fill="#2f7ed0"/>
<circle cx="116" cy="124.5" r="2.2" fill="#2f7ed0"/>
<circle cx="138" cy="124.5" r="2.2" fill="#2f7ed0"/>
<rect x="0.0" y="129.5" width="222.0" height="18.5" fill="url(#p1sea)"/>
</g></svg>
<!-- photo 2: yellow machine -->
<svg class="a" style="left:689px;top:300px" width="111" height="148" viewBox="0 0 111 148">
 <defs><filter id="bl2" x="0" y="0" width="1" height="1"><feGaussianBlur stdDeviation="0.6"/></filter>
 <linearGradient id="p2a" x1="0" y1="0" x2="1" y2="0"><stop offset="0" stop-color="#d89c18"/><stop offset=".3" stop-color="#f2bc3a"/><stop offset=".7" stop-color="#e2a820"/><stop offset="1" stop-color="#c8901a"/></linearGradient>
 <pattern id="rib" width="4.4" height="10" patternUnits="userSpaceOnUse"><rect width="4.4" height="10" fill="#e4aa26"/><rect x="0" width="1.2" height="10" fill="#a87a14"/><rect x="1.2" width="1" height="10" fill="#f5c85a"/></pattern></defs>
 <g filter="url(#bl2)">
 <rect width="111" height="148" fill="url(#p2a)"/>
 <rect x="0" y="0" width="28" height="45" fill="#e6ae34"/>
 <rect x="2" y="2" width="24" height="36" fill="#ecb840"/>
 <rect x="0" y="38" width="28" height="7" fill="#c8921e"/>
 <rect x="0" y="40" width="7" height="36" fill="#b8b8b2"/>
 <rect x="7" y="45" width="23" height="31" fill="#3a3a36"/>
 <rect x="28" y="0" width="27" height="76" fill="#eab232"/>
 <rect x="36" y="0" width="6" height="70" fill="#f6ca5e" opacity=".7"/>
 <rect x="55" y="0" width="44" height="69" fill="url(#rib)"/>
 <path d="M85 2a7 7 0 1 0 .1 0zM85 6a3 3 0 1 1-.1 0z" fill="#9ca4a8" fill-rule="evenodd"/>
 <rect x="99" y="0" width="12" height="40" fill="#f4f4f2"/>
 <rect x="99" y="40" width="12" height="36" fill="#dca224"/>
 <circle cx="105" cy="53" r="2.6" fill="#f4f4f2"/>
 <rect x="28" y="64" width="71" height="6" fill="#c48e1a"/>
 <path d="M28 70H97V91H28z" fill="#e8ae2c"/>
 <path d="M28 88H97" stroke="#a87414" stroke-width="1.5"/>
 <rect x="0" y="70" width="16" height="78" fill="#cacac6"/>
 <rect x="0" y="70" width="8" height="20" fill="#e8ecee"/>
 <rect x="14" y="94" width="9" height="41" fill="#e4aa26"/>
 <path d="M14 45C18 80 20 115 31 148" stroke="#111" stroke-width="6" fill="none"/>
 <path d="M20 70C35 80 50 88 67 86" stroke="#151515" stroke-width="1.6" fill="none"/>
 <rect x="28" y="91" width="63" height="57" fill="#ecb430"/>
 <rect x="43" y="92" width="11" height="13" fill="#1e1e18"/>
 <rect x="60" y="95" width="30" height="48" fill="#6c6a5a"/>
 <rect x="60" y="95" width="3" height="48" fill="#a8a898"/>
 <rect x="90" y="91" width="21" height="57" fill="#e2b452"/>
 <rect x="91" y="118" width="20" height="6" fill="#c89a3a"/>
 <rect x="28" y="143" width="63" height="5" fill="#d8a01e"/>
 <ellipse cx="49" cy="47" rx="3.5" ry="6" fill="#f2f2f0"/>
 <ellipse cx="64" cy="82" rx="5" ry="3.6" fill="#f2f2f0"/><circle cx="65" cy="83" r="2" fill="#1a1a1a"/>
 </g>
 <g fill="none" stroke="#e020e0" stroke-width="1.3"><ellipse cx="49" cy="47" rx="10" ry="13"/><ellipse cx="64" cy="82" rx="11" ry="11"/></g>
 <g fill="#e878e0" opacity=".75"><rect x="38" y="27" width="28" height="3"/><rect x="57" y="98" width="29" height="3.5"/></g>
</svg>
<!-- photo 3: blue structure -->
<svg class="a" style="left:808px;top:300px" width="114" height="148" viewBox="0 0 114 148">
 <defs><filter id="bl3" x="0" y="0" width="1" height="1"><feGaussianBlur stdDeviation="0.6"/></filter>
 <pattern id="perf" width="4" height="4" patternUnits="userSpaceOnUse"><rect width="4" height="4" fill="#3f6aa0"/><rect x="1" y="1" width="1.5" height="1.1" fill="#2a3a58" opacity=".7"/></pattern>
 <pattern id="pave" width="6" height="4" patternUnits="userSpaceOnUse"><rect width="6" height="4" fill="#bdb6ac"/><path d="M0 3.5H6M3 0V3.5" stroke="#a39b90" stroke-width=".7"/></pattern></defs>
 <g filter="url(#bl3)">
 <rect width="114" height="148" fill="#eef0f0"/>
 <path d="M10 0H29V16H14z" fill="#a8b2b8"/>
 <path d="M29 0H66V17H29z" fill="#4e6282"/>
 <path d="M20 4L66 4 60 12 26 16z" fill="#7d8ea8" opacity=".7"/>
 <circle cx="21" cy="28" r="10" fill="#a07868"/>
 <path d="M13 24 A10 10 0 0 1 28 20 V34 H13z" fill="#c05a50" opacity=".6"/>
 <rect x="28" y="20" width="14" height="20" fill="#d8d8d0"/>
 <rect x="6" y="42" width="46" height="6" fill="#2e3450"/>
 <rect x="1" y="46" width="28" height="33" fill="#e2aa2c"/>
 <rect x="29" y="48" width="11" height="28" fill="#e4e2dc"/>
 <rect x="40" y="17" width="20" height="60" fill="#c9ccd0"/>
 <rect x="0" y="79" width="38" height="21" fill="#dcdcd8"/>
 <path d="M4 82C8 95 20 96 34 86" stroke="#222" stroke-width="1.5" fill="none"/>
 <rect x="0" y="99" width="56" height="49" fill="url(#pave)"/>
 <path d="M0 100H30" stroke="#9a4a40" stroke-width="1.2"/>
 <path d="M0 136L38 140V148H0z" fill="#d9b24a"/>
 <rect x="38" y="70" width="5" height="31" fill="#3a6ab0"/>
 <rect x="58" y="17" width="13" height="113" fill="#2a3448"/>
 <rect x="69" y="0" width="45" height="44" fill="url(#perf)"/>
 <path d="M69 0H114V6H69z" fill="#34507a"/>
 <path d="M43 75L66 2 76 2 53 78z" fill="#3d6aa8"/>
 <rect x="65" y="42" width="26" height="89" fill="#3f7cc8"/>
 <rect x="62" y="42" width="5" height="89" fill="url(#perf)"/>
 <rect x="91" y="31" width="23" height="117" fill="#e6ae2a"/>
 <rect x="90" y="73" width="24" height="25" fill="#c99a28"/>
 <path d="M114 27L92 63 95 65 114 35z" fill="#3d6aa8"/>
 <path d="M89 100C95 106 102 108 108 104M90 106C96 112 103 114 110 110M91 112C97 117 103 118 108 116" stroke="#151515" stroke-width="2.6" fill="none"/>
 <path d="M52 130H90V148H52z" fill="#26262a"/>
 <rect x="102" y="137" width="12" height="11" fill="#222"/>
 <path d="M37 108L56 112 55 136 38 133z" fill="#c2c2be"/>
 </g>
 <ellipse cx="46" cy="120" rx="15.5" ry="20.5" fill="none" stroke="#e020e0" stroke-width="1.3"/>
 <rect x="8" y="131" width="22" height="3" fill="#e070e0" opacity=".7"/>
</svg>

<div class="a pt" style="left:595.5px;top:455.5px;font-size:11.5px;letter-spacing:1.67px;color:#1a1a1a">图 <span class="ln">3.2.5-1</span>&nbsp; 青岛港现场安装传感器</div>
<div class="a pt" style="left:484px;top:478px;letter-spacing:1.89px">青岛港智能集装箱码头信息物理系统先后获得中国港口协会 <span class="ln">2017</span> 年科技进</div>
<div class="a pt" style="left:456px;top:505px;letter-spacing:1.69px">步一等奖、<span class="ln">2018</span> 年青岛市科技进步一等奖、青岛市 <span class="ln">2017-2018</span> 优秀大数据应用案</div>
<div class="a pt" style="left:457px;top:532px;letter-spacing:1.74px">例、入选中国大数据产业生态联盟 <span class="ln">2017</span> 年应用案例。</div>
<!-- certificate 1 -->
<div class="a" style="left:470px;top:558px;width:297px;height:180px;border:1px solid #111;background:#fdfbf8;overflow:hidden">
 <div class="a" style="left:3px;top:4px;width:289px;height:180px;background:repeating-linear-gradient(60deg,#f5e8e2 0,#f5e8e2 2px,#fcf6f2 2px,#fcf6f2 4px)"></div>
 <div class="a" style="left:18px;top:21px;width:260px;height:180px;border:1px solid #eaa0a0;background:#fefdfb;box-shadow:inset 0 0 0 1px #fff,inset 0 0 0 2px #f4c8c0"></div>
 <svg class="a" style="left:44px;top:23px" width="212" height="18" viewBox="0 0 212 18"><path d="M0 0 H212 V4 C200 9 190 5 175 10 C160 14 150 9 130 13 C110 16 100 11 85 14 C70 16 60 9 45 11 C30 13 20 6 0 7z" fill="#f4e4da"/><path d="M0 3 C20 7 30 10 45 8 C60 6 70 13 85 11 C100 8 110 13 130 10 C150 6 160 11 175 7 C190 3 200 6 212 2" fill="none" stroke="#ecd2c4" stroke-width="1.2"/></svg>
 <div class="a" style="left:104px;top:45px;font-size:19px;line-height:22px;font-weight:bold;color:#5e4f12;letter-spacing:3px;white-space:nowrap">荣誉证书</div>
 <div class="a" style="left:117px;top:69px;font-size:5px;line-height:6px;color:#8a7430;white-space:nowrap;letter-spacing:.2px">HONORARY CREDENTIAL</div>
 <div class="a" style="left:117px;top:78px;width:15px;height:1px;background:#a89048"></div><div class="a" style="left:172px;top:78px;width:15px;height:1px;background:#a89048"></div><svg class="a" style="left:135px;top:74px" width="35" height="8" viewBox="0 0 35 8"><path d="M2 5c3-4 6 2 9-1s5-3 7 0 5 2 8-1 5 0 7 2" fill="none" stroke="#b09050" stroke-width="1"/></svg>
 <div class="a" style="left:55.5px;top:86.5px;font-size:9.2px;line-height:11px;font-weight:bold;color:#1a1a1a;white-space:nowrap;letter-spacing:0.1px">青岛市 2017−2018 年度优秀大数据应用案例</div>
 <div class="a" style="left:96.5px;top:108px;font-size:4.6px;line-height:7px;color:#2a2a2a;white-space:nowrap">案例名称：港口大型机械状态监测与分析系统</div>
 <div class="a" style="left:96.5px;top:118px;font-size:4.6px;line-height:7px;color:#2a2a2a;white-space:nowrap">申报单位：青岛港科技有限公司、中国海洋大学信息工程中心</div>
 <div class="a" style="left:96.5px;top:128.5px;font-size:4.6px;line-height:7px;color:#2a2a2a;white-space:nowrap">颁发日期：2018 年 4 月 13 日</div>
 <svg class="a" style="left:0;top:140px" width="297" height="30" viewBox="0 0 297 30">
  <g fill="none" stroke="#e48a8a" stroke-width="1.3"><circle cx="70" cy="16" r="12"/><circle cx="148" cy="24" r="12"/><circle cx="228" cy="17" r="12"/></g>
  <g fill="#ec9b9b"><path d="M70 11l1.5 3.5h3.5l-3 2.2 1.2 3.5-3.2-2.2-3.2 2.2 1.2-3.5-3-2.2h3.5z"/><path d="M148 19l1.5 3.5h3.5l-3 2.2 1.2 3.5-3.2-2.2-3.2 2.2 1.2-3.5-3-2.2h3.5z"/></g>
  <g stroke="#555" stroke-width="1.2" stroke-dasharray="1.6 .7" opacity=".75"><path d="M30 19.5h65M115 19h56M195 19h68"/></g><g stroke="#777" stroke-width="1" stroke-dasharray="1.5 .8" opacity=".6"><path d="M62 9h16M140 10h16M220 9h16M62 25h16M210 25h36"/></g>
 </svg>
</div>
<!-- certificate 2 -->
<div class="a" style="left:774px;top:558px;width:147px;height:180px;border:1px solid #111;border-width:1.5px;background:#fff;overflow:hidden">
 <div class="a" style="left:1px;top:1px;width:143px;height:180px;background:#dfc8ab"></div>
 <div class="a" style="left:4px;top:3px;width:137px;height:3px;background:#e4cf8e;opacity:.8"></div>
 <div class="a" style="left:4px;top:3px;width:3px;height:180px;background:#d8bd80;opacity:.8"></div>
 <div class="a" style="left:138px;top:3px;width:3px;height:180px;background:#d8bd80;opacity:.8"></div>
 <svg class="a" style="left:3px;top:2px" width="141" height="45" viewBox="0 0 141 45">
  <defs><pattern id="orn" width="3" height="3" patternUnits="userSpaceOnUse"><rect width="3" height="3" fill="#d8985a"/><circle cx="1.5" cy="1.5" r=".8" fill="#e4b07a" opacity=".6"/></pattern></defs>
  <path d="M1 1H20C18 5 15 8 12 11 9 13 7 17 6 22 5.5 28 5.5 34 5 40H1z" fill="url(#orn)"/>
  <path d="M140 1H121C123 5 126 8 129 11 132 13 134 17 135 22 135.5 28 135.5 34 136 40H140z" fill="url(#orn)"/>
 </svg>
<div class="a" style="left:69px;top:33px;width:6px;height:9px;background:linear-gradient(90deg,#58a050,#c8c040)"></div>
 <div class="a" style="left:48.5px;top:45px;font-size:4.4px;line-height:6px;color:#555;white-space:nowrap">中国大数据产业生态联盟</div>
 <div class="a" style="left:50px;top:52px;width:45px;height:1px;background:#aaa"></div>
 <div class="a" style="left:35.5px;top:61px;font-size:6.8px;line-height:8px;font-weight:bold;color:#222;white-space:nowrap">大数据应用案例认定证书</div>
 <div class="a" style="left:44px;top:71px;font-size:4.2px;line-height:5px;color:#444;white-space:nowrap">（证书编号：BDRB20171232003）</div>
 <div class="a" style="left:23px;top:84px;font-size:5px;line-height:6px;color:#111;font-weight:bold;white-space:nowrap">获奖者:</div>
 <div class="a" style="left:32.5px;top:92px;font-size:5.6px;line-height:7px;font-weight:bold;color:#333;white-space:nowrap">港口大型机械状态监测与分析系统</div>
 <div class="a" style="left:44px;top:100px;font-size:4.1px;line-height:5px;color:#555;white-space:nowrap">青岛港科技有限公司 中国海洋大学</div>
 <div class="a" style="left:22px;top:105px;width:100px;height:1px;background:#c8b090"></div>
 <div class="a" style="left:23px;top:115px;width:100px;font-size:4.5px;line-height:6px;color:#1a1a1a;font-weight:bold;">符合CSTC BDRD 04《大数据应用案例评价规范V1.0》的要求，经审查，本证书所有案例已通过机构测评认证。</div>
 <div class="a" style="left:23px;top:141px;font-size:4.5px;line-height:6px;color:#666;white-space:nowrap">供应单位：中国软件评测中心</div>
 <div class="a" style="left:69px;top:141px;font-size:6px;line-height:6px;font-weight:bold;font-style:italic;color:#d02020;white-space:nowrap">CSTC</div>
 <div class="a" style="left:23px;top:147px;font-size:4.5px;line-height:6px;color:#666;white-space:nowrap">颁发日期：2017年9月19日</div>
 <div class="a" style="left:23px;top:153px;font-size:4.5px;line-height:6px;color:#666;white-space:nowrap">有效期至：2019年9月18日</div>
 <svg class="a" style="left:80px;top:152px" width="50" height="30" viewBox="0 0 50 30"><circle cx="20" cy="20" r="13" fill="none" stroke="#e59090" stroke-width="1"/></svg>
 <div class="a" style="left:70px;top:163px;font-size:4.5px;line-height:6px;color:#555;white-space:nowrap">中国大数据产业生态联盟</div>
</div>

<div class="a" style="left:1349px;top:119px;width:17px;height:609px;background:#f0f0f0;border-left:1px solid #fafafa"></div>
<div class="a" style="left:1349px;top:118px;width:17px;height:9px;background:#e6e6e6;border:1px solid #8a8a8a;box-shadow:inset 0 0 0 1px #fff"></div>
<svg class="a" style="left:1353px;top:132px" width="9" height="8" viewBox="0 0 9 8"><path d="M1 6.5l3.5-4 3.5 4" fill="none" stroke="#555" stroke-width="1.8"/></svg>
<div class="a" style="left:1350px;top:306px;width:15px;height:17px;background:#cdcdcd"></div>
<svg class="a" style="left:1353px;top:716px" width="9" height="8" viewBox="0 0 9 8"><path d="M1 1.5l3.5 4 3.5-4" fill="none" stroke="#555" stroke-width="1.8"/></svg>

<div class="a" style="left:1200px;top:634px;width:74px;height:41px;border-radius:21px;background:#1e222b;box-shadow:0 0 1px 1px #262830"></div>
<div class="a" style="left:1215px;top:654px;width:55px;height:1px;background:#2e323c"></div>
<svg class="a" style="left:1154px;top:624px" width="62" height="62" viewBox="0 0 62 62">
 <defs>
  <radialGradient id="wc" cx="0.5" cy="0.3" r="0.7"><stop offset="0" stop-color="#3a3f4c"/><stop offset="1" stop-color="#2a2e38"/></radialGradient>
  <linearGradient id="arc" x1="0" y1="0" x2="0" y2="1"><stop offset="0" stop-color="#2ed0c0"/><stop offset="0.6" stop-color="#7ad070"/><stop offset="1" stop-color="#d8d040"/></linearGradient>
 </defs>
 <circle cx="31" cy="31" r="29" fill="url(#wc)" stroke="#1c1f26" stroke-width="1.5"/>
 <path d="M31 7 A24 24 0 0 1 35 54.7" fill="none" stroke="url(#arc)" stroke-width="1.6"/>
</svg>
<div class="a" style="left:1167px;top:639px;font-size:25px;line-height:28px;color:#d8d8dc;font-family:'Liberation Sans',sans-serif;letter-spacing:-0.5px;-webkit-text-stroke:0.3px #2c303a">48</div>
<div class="a" style="left:1195px;top:654px;font-size:10px;line-height:12px;color:#e8e8ea">%</div>
<svg class="a" style="left:1216px;top:640px" width="9" height="8" viewBox="0 0 9 8"><path d="M4.5 7.5V2M1.2 4.5L4.5 1l3.3 3.5" stroke="#3aa6f0" stroke-width="1.8" fill="none"/></svg>
<svg class="a" style="left:1216px;top:661px" width="9" height="8" viewBox="0 0 9 8"><path d="M4.5 0.5V6M1.2 3.5L4.5 7l3.3-3.5" stroke="#20b030" stroke-width="1.8" fill="none"/></svg>
<div class="a" style="left:1242px;top:638px;font-size:11px;line-height:13px;color:#e0e0e0;font-weight:bold">0</div>
<div class="a" style="left:1250px;top:640px;font-size:9px;line-height:11px;color:#bdbdbd">K/s</div>
<div class="a" style="left:1242px;top:659px;font-size:11px;line-height:13px;color:#e0e0e0;font-weight:bold">0</div>
<div class="a" style="left:1250px;top:661px;font-size:9px;line-height:11px;color:#bdbdbd">K/s</div>

<div id="taskbar" class="a"></div>
<div class="a" style="left:700px;top:728px;width:140px;height:40px;background:linear-gradient(100deg,transparent 0,rgba(255,255,255,.05) 45%,rgba(255,255,255,.07) 50%,transparent 100%)"></div>
<!-- windows logo -->
<svg class="a" style="left:11px;top:735px" width="28" height="26" viewBox="0 0 28 26">
 <path d="M0 3.5L11.5 2v10.3H0zM13 1.8L27.5 0v12.3H13zM0 13.7h11.5V24L0 22.5zM13 13.7h14.5V26L13 24.2z" fill="#fff"/>
</svg>
<!-- IE -->
<svg class="a" style="left:64px;top:731px" width="34" height="33" viewBox="0 0 34 33">
 <defs>
  <linearGradient id="ie" x1="0" y1="0" x2="0.3" y2="1"><stop offset="0" stop-color="#a8f0ff"/><stop offset=".5" stop-color="#62d2f6"/><stop offset="1" stop-color="#1d94dc"/></linearGradient>
  <linearGradient id="ier" x1="0" y1="1" x2="1" y2="0"><stop offset="0" stop-color="#f0b010"/><stop offset=".5" stop-color="#ffd84a"/><stop offset="1" stop-color="#f2b418"/></linearGradient>
  <mask id="iem"><rect width="34" height="33" fill="#fff"/><path d="M10.8 14.7A7.3 5.8 0 0 1 25.4 14.7z" fill="#000"/><path d="M10.8 17.9H33V21.5C29 23.5 24 23.6 18.5 23.3 13.5 23 10.8 21.2 10.8 17.9z" fill="#000"/></mask>
 </defs>
 <circle cx="18" cy="17" r="13.3" fill="url(#ie)" mask="url(#iem)"/>
 <path d="M3.5 29.5C1 25 7 15 15.5 9.2 23 4 28.5 1.2 30.8 2.8 32.5 4 31.8 7.5 30.2 10.5" fill="none" stroke="url(#ier)" stroke-width="2.6" stroke-linecap="round"/>
</svg>
<!-- explorer (highlighted) -->
<div class="a" style="left:113px;top:729px;width:59px;height:39px;background:rgba(255,255,255,.2);border:1px solid rgba(255,255,255,.35)"></div>
<svg class="a" style="left:126px;top:735px" width="34" height="30" viewBox="0 0 34 30">
 <path d="M2 6h12l2 2h16v19H2z" fill="#e8c860" stroke="#c8a040" stroke-width="1"/>
 <rect x="4" y="2.5" width="6" height="2.5" fill="#20c020"/><rect x="13" y="4.5" width="4" height="2.5" fill="#d03020"/><rect x="21" y="6" width="4" height="2.5" fill="#2090e0"/>
 <path d="M3 12h29v15H3z" fill="#f8e090"/>
 <path d="M6 28v-9c0-2 1-3 3-3h16c2 0 3 1 3 3v9h-4v-7H10v7z" fill="#7cc8ee" stroke="#2a90d0" stroke-width="1"/>
</svg>
<!-- feishu-like -->
<svg class="a" style="left:189px;top:732px" width="32" height="32" viewBox="0 0 32 32">
 <defs>
  <linearGradient id="fsb" x1="0" y1="0" x2="0" y2="1"><stop offset="0" stop-color="#ffffff"/><stop offset="1" stop-color="#e6e6fa"/></linearGradient>
  <linearGradient id="fsi" x1="0" y1="0" x2="1" y2="1"><stop offset="0" stop-color="#58b8f8"/><stop offset=".6" stop-color="#7a8af4"/><stop offset="1" stop-color="#a050ee"/></linearGradient>
 </defs>
 <rect x="0" y="0" width="32" height="32" rx="5" fill="url(#fsb)"/>
 <path d="M3 6.5C7 7 10 8 12.5 10.5 17 5 22 2.5 27 3 24 8 21.5 12 19.5 15.5L29 17C25.5 18.8 22.5 19.8 20.5 20.8L22 28C17 25 13.5 19.5 11.5 14.5 9.5 11 6.5 8.5 3 6.5z" fill="url(#fsi)"/>
</svg>
<!-- word (highlighted) -->
<div class="a" style="left:237px;top:729px;width:59px;height:39px;background:rgba(255,255,255,.2);border:1px solid rgba(255,255,255,.35)"></div>
<svg class="a" style="left:251px;top:732px" width="33" height="32" viewBox="0 0 33 32">
 <defs><linearGradient id="wdb" x1="0" y1="0" x2="1" y2="0"><stop offset="0" stop-color="#2a62c0"/><stop offset=".5" stop-color="#a8c4ec"/><stop offset="1" stop-color="#1a4aa8"/></linearGradient></defs>
 <path d="M8 1.5H24V27H1.5V9C1.5 5 4 1.5 8 1.5z" fill="#fff" stroke="#5a7ab8" stroke-width=".8"/>
 <path d="M3 9C3 5.5 5 3 8 3H11V26H3z" fill="url(#wdb)"/>
 <path d="M9.5 5.5L30 7V31L7.5 29.5z" fill="#f4f6fa" stroke="#9aa8c0" stroke-width=".6"/>
 <text x="11" y="15.5" font-family="Liberation Serif" font-style="italic" font-weight="bold" font-size="11" fill="#1a4aa8">W</text>
 <path d="M22 10h5.5M22 12.5h5.5M22 15h5.5M11 19h16.5M11 22h16.5M11 25h16.5" stroke="#1a4aa8" stroke-width="1.4"/>
</svg>
<!-- firefox -->
<svg class="a" style="left:313px;top:732px" width="32" height="32" viewBox="0 0 32 32">
 <defs>
  <radialGradient id="ff" cx="0.6" cy="0.25" r="0.85"><stop offset="0" stop-color="#ffe040"/><stop offset="0.45" stop-color="#ff9a20"/><stop offset="0.8" stop-color="#f5424a"/><stop offset="1" stop-color="#e0205a"/></radialGradient>
  <radialGradient id="ffg" cx="0.5" cy="0.35" r="0.6"><stop offset="0" stop-color="#b070f0"/><stop offset="1" stop-color="#5a3ad0"/></radialGradient>
 </defs>
 <path d="M22 1c3 3 8 8 9 15 0 8-6.5 15-15 15S1 24.5 1 17c0-4 1.5-7 3.5-9 0 2 1 3 2 3.5C8 8 11 6 14 6c-1 1-1.5 2-1.5 3 3-1 7 0 9 2 1-3 1-6 .5-10z" fill="url(#ff)"/>
 <circle cx="16" cy="17" r="6.8" fill="url(#ffg)"/>
 <path d="M5 12c3-1 6 0 8 2-2 1-3 2.5-3 4.5-2-1-4-3.5-5-6.5z" fill="#ff8a1a"/>
</svg>
<!-- chrome -->
<svg class="a" style="left:375px;top:732px" width="32" height="32" viewBox="0 0 32 32">
 <path d="M16 16L3.01 8.5A15 15 0 0 1 28.99 8.5z" fill="#db4437"/>
 <path d="M16 16L28.99 8.5A15 15 0 0 1 16 31z" fill="#f4c20d"/>
 <path d="M16 16L16 31A15 15 0 0 1 3.01 8.5z" fill="#0f9d58"/>
 <path d="M16 9H28.99L23 16z" fill="#db4437"/>
 <path d="M22 19.5L16 31 10 20z" fill="#f4c20d"/>
 <path d="M10 20L3.01 8.5 9.5 12.5z" fill="#0f9d58"/>
 <circle cx="16" cy="16" r="7" fill="#fff"/><circle cx="16" cy="16" r="5.6" fill="#4285f4"/>
</svg>
<!-- acrobat (active) -->
<div class="a" style="left:423px;top:729px;width:59px;height:39px;background:rgba(255,255,255,.35);border:1px solid rgba(255,255,255,.75)"></div>
<svg class="a" style="left:438px;top:732px" width="31" height="29" viewBox="0 0 31 29">
 <defs><linearGradient id="ac" x1="0" y1="0" x2="0" y2="1"><stop offset="0" stop-color="#fff"/><stop offset="1" stop-color="#d6d6d6"/></linearGradient></defs>
 <rect x="1" y="1" width="28" height="26" fill="url(#ac)" stroke="#8a8a8a" stroke-width="0.5"/>
 <path d="M15.5 4C14.3 4 14.5 7 15.3 10.5 16.5 14.5 20 17.5 25.5 17.8 27.5 17.8 27 16 24.3 15.6 19 15 12 17 7.2 20.8 4.6 23 5.8 24.5 8 21.5 10.8 17.5 14 11.5 15.8 6.3 16.3 4.5 16 4 15.5 4z" fill="none" stroke="#c8101e" stroke-width="1.3"/>
</svg>
<!-- tray -->
<svg class="a" style="left:1064px;top:739px" width="31" height="19" viewBox="0 0 31 19">
 <rect x="1" y="1" width="29" height="17" fill="none" stroke="#fff" stroke-width="1.6"/>
 <g fill="#fff"><rect x="4" y="4" width="3" height="2.5"/><rect x="8.5" y="4" width="3" height="2.5"/><rect x="13" y="4" width="3" height="2.5"/><rect x="17.5" y="4" width="3" height="2.5"/><rect x="22" y="4" width="4.5" height="2.5"/>
 <rect x="4" y="8" width="3" height="2.5"/><rect x="8.5" y="8" width="3" height="2.5"/><rect x="13" y="8" width="3" height="2.5"/><rect x="17.5" y="8" width="3" height="2.5"/><rect x="22" y="8" width="4.5" height="2.5"/>
 <rect x="4" y="12" width="3" height="2.5"/><rect x="8.5" y="12" width="13" height="2.5"/><rect x="22" y="12" width="4.5" height="2.5"/></g>
</svg>
<svg class="a" style="left:1107px;top:746px" width="10" height="6" viewBox="0 0 10 6"><path d="M1 5.5L5 1l4 4.5z" fill="#fff"/></svg>
<svg class="a" style="left:1127px;top:741px" width="19" height="17" viewBox="0 0 19 17">
 <path d="M2 1v15" stroke="#fff" stroke-width="1.5"/><path d="M3 2h9l-1.5 2.5L12 7H3z" fill="#fff"/>
 <circle cx="13" cy="11.5" r="4.5" fill="#e02020" stroke="#fff" stroke-width="0.8"/><path d="M11 9.5l4 4M15 9.5l-4 4" stroke="#fff" stroke-width="1.2"/>
</svg>
<svg class="a" style="left:1153px;top:741px" width="18" height="17" viewBox="0 0 18 17">
 <path d="M2 1v4M6 1v4M1 5h6v4H1zM4 9v7" stroke="#fff" stroke-width="1.5" fill="none"/>
 <rect x="9.5" y="2" width="7" height="14" fill="none" stroke="#fff" stroke-width="1.5"/><rect x="11.5" y="0.8" width="3" height="1.5" fill="#fff"/><rect x="11.3" y="4" width="3.4" height="10" fill="#fff"/>
</svg>
<svg class="a" style="left:1178px;top:742px" width="15" height="15" viewBox="0 0 15 15">
 <path d="M1 5h3l4-4v13l-4-4H1z" fill="#fff"/><path d="M11 4c1.5 1.5 1.5 5.5 0 7" stroke="#fff" stroke-width="1" fill="none"/>
</svg>
<svg class="a" style="left:1200px;top:743px" width="17" height="14" viewBox="0 0 17 14">
 <g fill="#fff"><rect x="1" y="11" width="2" height="2"/><rect x="4.5" y="9" width="2" height="4"/><rect x="8" y="6.5" width="2" height="6.5"/><rect x="11.5" y="3.5" width="2" height="9.5"/></g>
 <rect x="14.5" y="1" width="2" height="12" fill="#8898b8"/>
</svg>
<div class="a tk" style="left:1228.5px;top:741px;font-size:15px;line-height:18px">中</div>
<div class="a" style="left:1257px;top:742px;width:16px;height:15px;background:#fff;border:1px solid #000;color:#000;font-size:14px;line-height:14px;text-align:center;font-weight:normal">M</div>
<div class="a tk" style="left:1304px;top:732px;font-size:13px;line-height:15px">17:09</div>
<div class="a tk" style="left:1290px;top:750px;font-size:13px;line-height:15px">2021/9/20</div>


</body></html>
